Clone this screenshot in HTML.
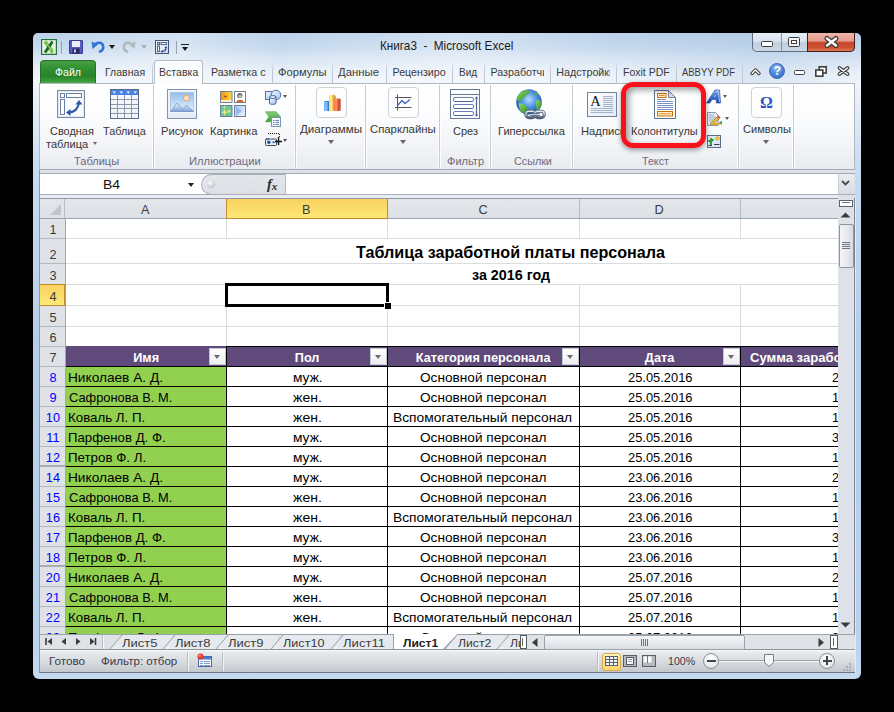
<!DOCTYPE html><html><head><meta charset="utf-8"><style>
html,body{margin:0;padding:0;background:#000;width:894px;height:712px;overflow:hidden;position:relative;font-family:"Liberation Sans",sans-serif}
div{box-sizing:border-box}
svg{display:block}
</style></head><body>
<div style="position:absolute;left:33px;top:33px;width:828px;height:646px;border-radius:5px 5px 6px 6px;background:linear-gradient(180deg,#bad0e9 0px,#c4d8ee 14px,#dae6f4 27px,#ebf1f9 40px,#f0f5fb 50px,#c9dcf0 130px,#b5cee9 300px,#b9d1eb 600px,#c4daf0 646px);"></div>
<div style="position:absolute;left:33px;top:33px;width:828px;height:50px;border-radius:5px 5px 0 0;background:linear-gradient(105deg,rgba(255,255,255,0) 0%,rgba(255,255,255,.35) 18%,rgba(170,195,225,.0) 30%,rgba(255,255,255,.35) 50%,rgba(255,255,255,0) 70%,rgba(160,190,220,.25) 88%,rgba(255,255,255,0) 100%);"></div>
<div style="position:absolute;left:39px;top:83px;width:816px;height:590px;border:1px solid #8a97a7;background:#e9edf2"></div>
<svg style="position:absolute;left:41px;top:39px;overflow:visible" width="16" height="16" viewBox="0 0 16 16"><defs><linearGradient id="xl" x1="0" y1="0" x2="1" y2="1"><stop offset="0" stop-color="#f6fbf3"/><stop offset="1" stop-color="#d4ecd0"/></linearGradient></defs>
<rect x="0.6" y="0.6" width="14.8" height="14.8" fill="url(#xl)" stroke="#23723a" stroke-width="1.2"/>
<path d="M4 2.5 L12 13.5" stroke="#6cc03a" stroke-width="3.6"/>
<path d="M11.5 2.5 L4 13.5" stroke="#1f6a2e" stroke-width="3"/>
<path d="M5.5 4.5 L10.5 11.5" stroke="#9ad868" stroke-width="1.2"/>
<path d="M13.2 2 V14" stroke="#eef8ea" stroke-width="1.4"/></svg>
<div style="position:absolute;left:61px;top:41px;width:1px;height:13px;background:#95a3b3"></div>
<svg style="position:absolute;left:69px;top:40px;overflow:visible" width="14" height="14" viewBox="0 0 14 14"><rect x="0.5" y="0.5" width="13" height="13" rx=".5" fill="#5a5cc6" stroke="#3a3a90"/>
<rect x="3" y="1" width="8" height="6" fill="#eceef6"/>
<rect x="3.5" y="8.5" width="7" height="5" fill="#262a5a"/>
<rect x="5" y="9.5" width="2" height="3" fill="#d0d4e8"/></svg>
<svg style="position:absolute;left:91px;top:39px;overflow:visible" width="15" height="15" viewBox="0 0 15 15"><path d="M3.5 6.5 C 5 3, 11 2.5, 12 6.5 C 12.8 9.5, 11 12, 8 13" fill="none" stroke="#2f74d8" stroke-width="2.6"/>
<path d="M0.5 2.5 L7 5.5 L1.5 10 Z" fill="#2f74d8"/></svg>
<div style="position:absolute;left:109px;top:45px;width:0;height:0;border-left:3.5px solid transparent;border-right:3.5px solid transparent;border-top:4px solid #1a1a1a"></div>
<svg style="position:absolute;left:121px;top:39px;overflow:visible" width="15" height="15" viewBox="0 0 15 15"><path d="M11.5 6.5 C 10 3, 4 2.5, 3 6.5 C 2.2 9.5, 4 12, 7 13" fill="none" stroke="#b5b9be" stroke-width="2.6"/>
<path d="M14.5 2.5 L8 5.5 L13.5 10 Z" fill="#b5b9be"/></svg>
<div style="position:absolute;left:141px;top:45px;width:0;height:0;border-left:3.5px solid transparent;border-right:3.5px solid transparent;border-top:4px solid #a9aeb5"></div>
<svg style="position:absolute;left:155px;top:40px;overflow:visible" width="14" height="14" viewBox="0 0 14 14"><defs><linearGradient id="fm" x1="0" y1="0" x2="1" y2="1"><stop offset="0" stop-color="#fbfcfe"/><stop offset="1" stop-color="#c9d6ea"/></linearGradient></defs>
<rect x="0.5" y="0.5" width="13" height="13" fill="url(#fm)" stroke="#3f5278"/>
<rect x="2.5" y="2.5" width="2" height="2" fill="#fff" stroke="#3f5278" stroke-width=".9"/><rect x="6" y="2.5" width="5.5" height="2" fill="#fff" stroke="#3f5278" stroke-width=".9"/>
<rect x="2.5" y="6" width="2" height="5.5" fill="#fff" stroke="#3f5278" stroke-width=".9"/>
<path d="M6.5 11.5 C9 11.5 11 10 11 7.5" fill="none" stroke="#2a4a9a" stroke-width="1.2"/><path d="M5.5 11.5 L7.5 10 V13Z M11 6 L9.6 8 H12.4Z" fill="#2a4a9a"/></svg>
<div style="position:absolute;left:176px;top:41px;width:1px;height:13px;background:#95a3b3"></div>
<div style="position:absolute;left:181px;top:44px;width:8px;height:1.2px;background:#1a1a1a"></div>
<div style="position:absolute;left:181.5px;top:46.5px;width:0;height:0;border-left:3.5px solid transparent;border-right:3.5px solid transparent;border-top:4px solid #1a1a1a"></div>
<div style="position:absolute;left:379.87px;top:40.33px;font-family:'Liberation Sans',sans-serif;font-size:12.6px;line-height:12.6px;font-weight:400;color:#1b1b1b;white-space:nowrap;transform:scaleX(0.9306);transform-origin:0 0;">Книга3&nbsp; -&nbsp; Microsoft Excel</div>
<div style="position:absolute;left:752px;top:33px;width:103px;height:19px;border:1px solid #5e6e82;border-top:none;border-radius:0 0 5px 5px;background:linear-gradient(180deg,#e6edf6 0%,#d9e3ee 45%,#c0cfdf 55%,#cbd8e6 100%)"></div>
<div style="position:absolute;left:781px;top:33px;width:1px;height:18px;background:#8696aa"></div>
<div style="position:absolute;left:807px;top:33px;width:48px;height:19px;border:1px solid #4a1a14;border-top:none;border-radius:0 0 5px 0;background:linear-gradient(180deg,#efb6a8 0%,#e39a8a 45%,#c9472d 52%,#cd5034 80%,#de7a55 100%)"></div>
<div style="position:absolute;left:761px;top:41px;width:12px;height:6px;background:#fff;border:1.5px solid #3c3c3c;border-radius:1.5px"></div>
<div style="position:absolute;left:788px;top:37px;width:12px;height:10px;background:#f4f4f4;border:1.5px solid #3c3c3c;border-radius:1.5px"></div>
<div style="position:absolute;left:791px;top:40px;width:6px;height:4px;background:#fff;border:1.5px solid #3c3c3c"></div>
<svg style="position:absolute;left:824px;top:36px;overflow:visible" width="15" height="12" viewBox="0 0 15 12"><path d="M3 2.5 L12 9.5 M12 2.5 L3 9.5" stroke="#3a3a3a" stroke-width="5" stroke-linecap="round"/>
<path d="M3 2.5 L12 9.5 M12 2.5 L3 9.5" stroke="#fff" stroke-width="2.4" stroke-linecap="round"/></svg>
<div style="position:absolute;left:40px;top:60px;width:56px;height:24px;border-radius:4px 4px 0 0;border:1px solid #2e6e2e;border-bottom:none;background:linear-gradient(180deg,#45a043 0%,#2f8f31 35%,#26832a 65%,#3c9c3c 88%,#62b85c 100%)"></div>
<div style="position:absolute;left:54.80px;top:66.64px;font-family:'Liberation Sans',sans-serif;font-size:10.7px;line-height:10.7px;font-weight:400;color:#ffffff;white-space:nowrap;transform:scaleX(0.9908);transform-origin:0 0;">Файл</div>
<div style="position:absolute;left:272px;top:61px;width:1px;height:22px;background:linear-gradient(180deg,rgba(180,195,212,0) 0%,#c2ccd8 40%,#b8c3cf 100%)"></div>
<div style="position:absolute;left:332px;top:61px;width:1px;height:22px;background:linear-gradient(180deg,rgba(180,195,212,0) 0%,#c2ccd8 40%,#b8c3cf 100%)"></div>
<div style="position:absolute;left:386px;top:61px;width:1px;height:22px;background:linear-gradient(180deg,rgba(180,195,212,0) 0%,#c2ccd8 40%,#b8c3cf 100%)"></div>
<div style="position:absolute;left:452px;top:61px;width:1px;height:22px;background:linear-gradient(180deg,rgba(180,195,212,0) 0%,#c2ccd8 40%,#b8c3cf 100%)"></div>
<div style="position:absolute;left:484px;top:61px;width:1px;height:22px;background:linear-gradient(180deg,rgba(180,195,212,0) 0%,#c2ccd8 40%,#b8c3cf 100%)"></div>
<div style="position:absolute;left:550px;top:61px;width:1px;height:22px;background:linear-gradient(180deg,rgba(180,195,212,0) 0%,#c2ccd8 40%,#b8c3cf 100%)"></div>
<div style="position:absolute;left:616px;top:61px;width:1px;height:22px;background:linear-gradient(180deg,rgba(180,195,212,0) 0%,#c2ccd8 40%,#b8c3cf 100%)"></div>
<div style="position:absolute;left:676px;top:61px;width:1px;height:22px;background:linear-gradient(180deg,rgba(180,195,212,0) 0%,#c2ccd8 40%,#b8c3cf 100%)"></div>
<div style="position:absolute;left:742px;top:61px;width:1px;height:22px;background:linear-gradient(180deg,rgba(180,195,212,0) 0%,#c2ccd8 40%,#b8c3cf 100%)"></div>
<div style="position:absolute;left:152px;top:61px;width:1px;height:22px;background:linear-gradient(180deg,rgba(180,195,212,0) 0%,#c2ccd8 40%,#b8c3cf 100%)"></div>
<div style="position:absolute;left:104.75px;top:66.64px;font-family:'Liberation Sans',sans-serif;font-size:10.7px;line-height:10.7px;font-weight:400;color:#3b3b3b;white-space:nowrap;transform:scaleX(0.9856);transform-origin:0 0;">Главная</div>
<div style="position:absolute;left:154px;top:60px;width:49px;height:24px;border:1px solid #b6bdc6;border-bottom:none;border-radius:3px 3px 0 0;background:linear-gradient(180deg,#fafbfd 0%,#fdfdfe 100%)"></div>
<div style="position:absolute;left:158.80px;top:66.64px;font-family:'Liberation Sans',sans-serif;font-size:10.7px;line-height:10.7px;font-weight:400;color:#3b3b3b;white-space:nowrap;transform:scaleX(0.9905);transform-origin:0 0;">Вставка</div>
<div style="position:absolute;left:0;top:0;width:894px;height:712px;clip-path:inset(60px 628px 629px 205px)">
<div style="position:absolute;left:211.00px;top:66.64px;font-family:'Liberation Sans',sans-serif;font-size:10.7px;line-height:10.7px;font-weight:400;color:#3b3b3b;white-space:nowrap;">Разметка страницы</div>
</div>
<div style="position:absolute;left:277.60px;top:66.64px;font-family:'Liberation Sans',sans-serif;font-size:10.7px;line-height:10.7px;font-weight:400;color:#3b3b3b;white-space:nowrap;transform:scaleX(1.0431);transform-origin:0 0;">Формулы</div>
<div style="position:absolute;left:338.00px;top:66.64px;font-family:'Liberation Sans',sans-serif;font-size:10.7px;line-height:10.7px;font-weight:400;color:#3b3b3b;white-space:nowrap;transform:scaleX(1.0603);transform-origin:0 0;">Данные</div>
<div style="position:absolute;left:0;top:0;width:894px;height:712px;clip-path:inset(60px 448px 629px 386px)">
<div style="position:absolute;left:392.50px;top:66.64px;font-family:'Liberation Sans',sans-serif;font-size:10.7px;line-height:10.7px;font-weight:400;color:#3b3b3b;white-space:nowrap;">Рецензирование</div>
</div>
<div style="position:absolute;left:458.80px;top:66.64px;font-family:'Liberation Sans',sans-serif;font-size:10.7px;line-height:10.7px;font-weight:400;color:#3b3b3b;white-space:nowrap;transform:scaleX(0.9354);transform-origin:0 0;">Вид</div>
<div style="position:absolute;left:0;top:0;width:894px;height:712px;clip-path:inset(60px 350px 629px 484px)">
<div style="position:absolute;left:490.50px;top:66.64px;font-family:'Liberation Sans',sans-serif;font-size:10.7px;line-height:10.7px;font-weight:400;color:#3b3b3b;white-space:nowrap;">Разработчик</div>
</div>
<div style="position:absolute;left:0;top:0;width:894px;height:712px;clip-path:inset(60px 284px 629px 550px)">
<div style="position:absolute;left:556.30px;top:66.64px;font-family:'Liberation Sans',sans-serif;font-size:10.7px;line-height:10.7px;font-weight:400;color:#3b3b3b;white-space:nowrap;">Надстройки</div>
</div>
<div style="position:absolute;left:622.60px;top:66.64px;font-family:'Liberation Sans',sans-serif;font-size:10.7px;line-height:10.7px;font-weight:400;color:#3b3b3b;white-space:nowrap;transform:scaleX(0.9838);transform-origin:0 0;">Foxit PDF</div>
<div style="position:absolute;left:682.00px;top:66.64px;font-family:'Liberation Sans',sans-serif;font-size:10.7px;line-height:10.7px;font-weight:400;color:#3b3b3b;white-space:nowrap;transform:scaleX(0.8849);transform-origin:0 0;">ABBYY PDF</div>
<div style="position:absolute;left:39px;top:83px;width:816px;height:87px;border:1px solid #b1b8c1;border-bottom:1px solid #a5acb5;background:linear-gradient(180deg,#ffffff 0%,#fbfcfd 40%,#f1f3f6 75%,#e8ebef 100%)"></div>
<div style="position:absolute;left:155px;top:83px;width:47px;height:1px;background:#fdfdfe"></div>
<div style="position:absolute;left:152px;top:85px;width:3px;height:84px;background:linear-gradient(90deg,rgba(255,255,255,.9) 0,rgba(255,255,255,.9) 1px,#c6cbd2 1px,#c6cbd2 2px,rgba(255,255,255,.9) 2px)"></div>
<div style="position:absolute;left:294px;top:85px;width:3px;height:84px;background:linear-gradient(90deg,rgba(255,255,255,.9) 0,rgba(255,255,255,.9) 1px,#c6cbd2 1px,#c6cbd2 2px,rgba(255,255,255,.9) 2px)"></div>
<div style="position:absolute;left:364px;top:85px;width:3px;height:84px;background:linear-gradient(90deg,rgba(255,255,255,.9) 0,rgba(255,255,255,.9) 1px,#c6cbd2 1px,#c6cbd2 2px,rgba(255,255,255,.9) 2px)"></div>
<div style="position:absolute;left:438px;top:85px;width:3px;height:84px;background:linear-gradient(90deg,rgba(255,255,255,.9) 0,rgba(255,255,255,.9) 1px,#c6cbd2 1px,#c6cbd2 2px,rgba(255,255,255,.9) 2px)"></div>
<div style="position:absolute;left:489px;top:85px;width:3px;height:84px;background:linear-gradient(90deg,rgba(255,255,255,.9) 0,rgba(255,255,255,.9) 1px,#c6cbd2 1px,#c6cbd2 2px,rgba(255,255,255,.9) 2px)"></div>
<div style="position:absolute;left:571px;top:85px;width:3px;height:84px;background:linear-gradient(90deg,rgba(255,255,255,.9) 0,rgba(255,255,255,.9) 1px,#c6cbd2 1px,#c6cbd2 2px,rgba(255,255,255,.9) 2px)"></div>
<div style="position:absolute;left:737px;top:85px;width:3px;height:84px;background:linear-gradient(90deg,rgba(255,255,255,.9) 0,rgba(255,255,255,.9) 1px,#c6cbd2 1px,#c6cbd2 2px,rgba(255,255,255,.9) 2px)"></div>
<div style="position:absolute;left:792px;top:85px;width:3px;height:84px;background:linear-gradient(90deg,rgba(255,255,255,.9) 0,rgba(255,255,255,.9) 1px,#c6cbd2 1px,#c6cbd2 2px,rgba(255,255,255,.9) 2px)"></div>
<svg style="position:absolute;left:57px;top:90px;overflow:visible" width="28" height="28" viewBox="0 0 28 28"><rect x="0.5" y="0.5" width="27" height="27" fill="#fafbfd" stroke="#7a8aa3"/>
<rect x="1.5" y="1.5" width="25" height="25" fill="none" stroke="#e4e9f1"/>
<rect x="3.5" y="3.5" width="4" height="4" fill="#fff" stroke="#6a7fa6"/>
<rect x="9.5" y="3.5" width="15" height="4" fill="#fff" stroke="#6a7fa6"/>
<rect x="3.5" y="9.5" width="4" height="15" fill="#fff" stroke="#6a7fa6"/>
<path d="M12 22.5 C 17 22, 21 19, 22 13" fill="none" stroke="#2d5aa6" stroke-width="2"/>
<path d="M9 22.5 L13.5 19 L13.5 26 Z" fill="#2d5aa6"/><path d="M22 10 L18.5 14.5 L25.5 14.5 Z" fill="#2d5aa6"/></svg>
<svg style="position:absolute;left:110px;top:89px;overflow:visible" width="29" height="30" viewBox="0 0 29 30"><rect x="0.5" y="0.5" width="28" height="29" fill="#f3f5f9" stroke="#5d6b86"/>
<rect x="1" y="1" width="27" height="5" fill="#4a82e4"/>
<path d="M7.5 6 V29 M14.5 6 V29 M21.5 6 V29 M1 10.5 H28 M1 15.5 H28 M1 19.5 H28 M1 24.5 H28" stroke="#8d99ad" stroke-width="1"/>
<path d="M2.5 2.5 H6 L4.25 4.5Z M9.5 2.5 H13 L11.25 4.5Z M16.5 2.5 H20 L18.25 4.5Z M23.5 2.5 H27 L25.25 4.5Z" fill="#fff"/></svg>
<div style="position:absolute;left:49.80px;top:126.07px;font-family:'Liberation Sans',sans-serif;font-size:10.9px;line-height:10.9px;font-weight:400;color:#363636;white-space:nowrap;transform:scaleX(1.0029);transform-origin:0 0;">Сводная</div>
<div style="position:absolute;left:46.40px;top:139.07px;font-family:'Liberation Sans',sans-serif;font-size:10.9px;line-height:10.9px;font-weight:400;color:#363636;white-space:nowrap;transform:scaleX(1.0178);transform-origin:0 0;">таблица</div>
<div style="position:absolute;left:93px;top:142px;width:0;height:0;border-left:2.5px solid transparent;border-right:2.5px solid transparent;border-top:3px solid #6a6a6a"></div>
<div style="position:absolute;left:103.00px;top:126.07px;font-family:'Liberation Sans',sans-serif;font-size:10.9px;line-height:10.9px;font-weight:400;color:#363636;white-space:nowrap;">Таблица</div>
<div style="position:absolute;left:74.40px;top:155.97px;font-family:'Liberation Sans',sans-serif;font-size:10.9px;line-height:10.9px;font-weight:400;color:#6f6a7e;white-space:nowrap;transform:scaleX(1.0147);transform-origin:0 0;">Таблицы</div>
<svg style="position:absolute;left:167px;top:89px;overflow:visible" width="30" height="30" viewBox="0 0 30 30"><rect x="0.5" y="0.5" width="29" height="29" fill="#eef3f9" stroke="#8094b2"/>
<defs><linearGradient id="sky" x1="0" y1="0" x2="0" y2="1"><stop offset="0" stop-color="#8fbef0"/><stop offset="1" stop-color="#e8f2fc"/></linearGradient>
<linearGradient id="mt" x1="0" y1="0" x2="0" y2="1"><stop offset="0" stop-color="#f4f8fe"/><stop offset="1" stop-color="#7d9fd8"/></linearGradient></defs>
<rect x="3.5" y="3.5" width="23" height="19" fill="url(#sky)" stroke="#a9bdd8" stroke-width=".8"/>
<circle cx="19.5" cy="9" r="3" fill="#fde6c8" stroke="#f29a58" stroke-width="1"/>
<path d="M3.5 22.5 L10 14 L15.5 20 L19.5 16 L26.5 22.5Z" fill="url(#mt)" stroke="#6f8fc0" stroke-width=".7"/>
<rect x="1" y="24.5" width="28" height="4.5" fill="#e4ebf5"/></svg>
<svg style="position:absolute;left:220px;top:91px;overflow:visible" width="26" height="26" viewBox="0 0 26 26"><defs><linearGradient id="ca1" x1="0" x2="1"><stop offset="0" stop-color="#f48a10"/><stop offset="1" stop-color="#fde040"/></linearGradient>
<linearGradient id="ca4" x1="0" y1="0" x2="1" y2="1"><stop offset="0" stop-color="#a8c8f8"/><stop offset="1" stop-color="#eef4fe"/></linearGradient></defs>
<rect x="0.5" y="0.5" width="11.5" height="11" fill="url(#ca1)" stroke="#6f7f96"/><path d="M1 9 H11.5 V11 H1Z" fill="#fde8d0"/><ellipse cx="5.5" cy="5.5" rx="1.8" ry="1" fill="#b05a20"/>
<rect x="14.5" y="0.5" width="11" height="11" fill="#fff" stroke="#6f7f96"/><circle cx="19.8" cy="4.5" r="2.6" fill="#6a6a6a"/><circle cx="20" cy="5.2" r="1.5" fill="#c8c8c8"/><path d="M16.5 11 C16.5 8 23.5 8 23.5 11Z" fill="#d8601a"/>
<rect x="0.5" y="14.5" width="11.5" height="11" fill="#6cc89c" stroke="#6f7f96"/><path d="M4.5 17.5 L5.3 20.5 L8.5 21.3 L5.3 22 L4.5 25 L3.7 22 L1 21.3 L3.7 20.5Z M9 18 L9.6 19.6 L11.2 20.2 L9.6 20.8 L9 22.4 L8.4 20.8 L6.8 20.2 L8.4 19.6Z M4.5 14.5 L5 16 L6.5 16.3 L5 16.7 L4.5 17.5 L4 16.7 L2.5 16.3 L4 16Z" fill="#f8f078"/>
<rect x="14.5" y="14.5" width="11" height="11" fill="url(#ca4)" stroke="#6f7f96"/><path d="M16 15.5 L22 20 L16 25Z" fill="#8ab0ee" opacity=".8"/></svg>
<svg style="position:absolute;left:265px;top:89px;overflow:visible" width="16" height="16" viewBox="0 0 16 16"><defs><linearGradient id="sh" x1="0" y1="0" x2="1" y2="1"><stop offset="0" stop-color="#eef5fd"/><stop offset="1" stop-color="#a9c6ee"/></linearGradient></defs>
<rect x="0.5" y="2.5" width="9" height="8" fill="url(#sh)" stroke="#4f72b0"/>
<circle cx="11" cy="6" r="4.8" fill="url(#sh)" stroke="#4f72b0"/>
<path d="M4.5 8 V14 C4.5 15.8 11 15.8 11 14 V8" fill="url(#sh)" stroke="#3f62a0"/><ellipse cx="7.75" cy="8" rx="3.25" ry="1.4" fill="#f4f8fe" stroke="#3f62a0"/></svg>
<div style="position:absolute;left:283px;top:95px;width:0;height:0;border-left:2.5px solid transparent;border-right:2.5px solid transparent;border-top:3px solid #555"></div>
<svg style="position:absolute;left:265px;top:111px;overflow:visible" width="16" height="16" viewBox="0 0 16 16"><defs><linearGradient id="sa" x1="0" y1="0" x2="0" y2="1"><stop offset="0" stop-color="#8ad07a"/><stop offset="1" stop-color="#3a9a3a"/></linearGradient></defs>
<path d="M0.5 0.8 H11 L15.5 5.8 L11 10.8 H0.5 L4 5.8Z" fill="url(#sa)" stroke="#4a9a4a" stroke-width=".6"/>
<rect x="6.5" y="6.5" width="9" height="9" fill="#f4f7fb" stroke="#8094ae"/>
<path d="M8 9.5 H9.5 M10.5 9.5 H14 M8 11.5 H9.5 M10.5 11.5 H14 M8 13.5 H9.5 M10.5 13.5 H14" stroke="#6a84b8" stroke-width="1"/></svg>
<svg style="position:absolute;left:265px;top:133px;overflow:visible" width="17" height="14" viewBox="0 0 17 14"><path d="M3 0.5 H14.5 V5" fill="none" stroke="#222" stroke-width="1" stroke-dasharray="1,1"/>
<rect x="0.5" y="6" width="11" height="6.5" rx="1" fill="#e8eef6" stroke="#3a4a66"/><path d="M1 6 h3" stroke="#2a5aa8" stroke-width="1.2"/>
<circle cx="3.8" cy="9.3" r="1.7" fill="#1f4f98"/><rect x="7.5" y="8.5" width="2" height="1.6" fill="#1f4f98"/>
<path d="M13.5 4 V12 M10 8.5 H17" stroke="#111" stroke-width="1.4"/></svg>
<div style="position:absolute;left:283px;top:139px;width:0;height:0;border-left:2.5px solid transparent;border-right:2.5px solid transparent;border-top:3px solid #555"></div>
<div style="position:absolute;left:161.40px;top:126.07px;font-family:'Liberation Sans',sans-serif;font-size:10.9px;line-height:10.9px;font-weight:400;color:#363636;white-space:nowrap;transform:scaleX(1.0240);transform-origin:0 0;">Рисунок</div>
<div style="position:absolute;left:209.60px;top:126.07px;font-family:'Liberation Sans',sans-serif;font-size:10.9px;line-height:10.9px;font-weight:400;color:#363636;white-space:nowrap;transform:scaleX(1.0231);transform-origin:0 0;">Картинка</div>
<div style="position:absolute;left:189.40px;top:155.97px;font-family:'Liberation Sans',sans-serif;font-size:10.9px;line-height:10.9px;font-weight:400;color:#6f6a7e;white-space:nowrap;transform:scaleX(1.0291);transform-origin:0 0;">Иллюстрации</div>
<div style="position:absolute;left:316px;top:87px;width:31px;height:31px;border:1px solid #cdd2d9;border-radius:4px;background:#fdfdfe"></div>
<svg style="position:absolute;left:323px;top:94px;overflow:visible" width="18" height="18" viewBox="0 0 18 18"><defs><linearGradient id="cb" x1="0" x2="1"><stop offset="0" stop-color="#5aa8f4"/><stop offset=".4" stop-color="#9ccaf8"/><stop offset="1" stop-color="#2a6ac8"/></linearGradient>
<linearGradient id="cy" x1="0" x2="1"><stop offset="0" stop-color="#f8d848"/><stop offset=".4" stop-color="#fff0a0"/><stop offset="1" stop-color="#d09a00"/></linearGradient>
<linearGradient id="cr" x1="0" x2="1"><stop offset="0" stop-color="#ff6a3a"/><stop offset=".4" stop-color="#ff9a70"/><stop offset="1" stop-color="#d02a08"/></linearGradient></defs>
<path d="M1 8 L2.2 7 H6 V17 H1Z" fill="url(#cb)"/><path d="M1 8 L2.2 7 H6.5 L5.5 8Z" fill="#3a88e8"/>
<path d="M6 2 L7.2 1 H11.5 V17 H6Z" fill="url(#cy)"/><path d="M11.5 1 L12.5 2 V16.5 L11.5 17Z" fill="#a87800"/>
<path d="M11 5.5 L12.2 4.5 H16.5 V17 H11Z" fill="url(#cr)"/><path d="M16.5 4.5 L17.5 5.5 V16.5 L16.5 17Z" fill="#901a04"/></svg>
<div style="position:absolute;left:300.00px;top:123.87px;font-family:'Liberation Sans',sans-serif;font-size:10.9px;line-height:10.9px;font-weight:400;color:#363636;white-space:nowrap;transform:scaleX(1.0636);transform-origin:0 0;">Диаграммы</div>
<div style="position:absolute;left:328px;top:140px;width:0;height:0;border-left:3.5px solid transparent;border-right:3.5px solid transparent;border-top:4px solid #666"></div>
<div style="position:absolute;left:388px;top:87px;width:31px;height:31px;border:1px solid #cdd2d9;border-radius:4px;background:#fdfdfe"></div>
<svg style="position:absolute;left:395px;top:94px;overflow:visible" width="17" height="17" viewBox="0 0 17 17"><path d="M2.5 0.5 V16.5 M0 3.5 H16.5 M0 13.5 H16.5" stroke="#555" stroke-width="1"/>
<path d="M3 11 L7 6.5 L10 9.5 L15 5.5" fill="none" stroke="#3a66c8" stroke-width="1.4"/></svg>
<div style="position:absolute;left:370.40px;top:123.87px;font-family:'Liberation Sans',sans-serif;font-size:10.9px;line-height:10.9px;font-weight:400;color:#363636;white-space:nowrap;transform:scaleX(1.0400);transform-origin:0 0;">Спарклайны</div>
<div style="position:absolute;left:400px;top:140px;width:0;height:0;border-left:3.5px solid transparent;border-right:3.5px solid transparent;border-top:4px solid #666"></div>
<svg style="position:absolute;left:450px;top:89px;overflow:visible" width="30" height="30" viewBox="0 0 30 30"><rect x="0.5" y="0.5" width="29" height="29" fill="#fbfcfd" stroke="#6a7b96"/>
<path d="M1 5.5 H29" stroke="#6a7b96"/>
<rect x="3.5" y="8.5" width="20" height="4" rx="1.5" fill="#fff" stroke="#6a80b4"/><path d="M4.5 12.5 H22.5" stroke="#4a64a8"/>
<rect x="3.5" y="15.5" width="20" height="4" rx="1.5" fill="#fff" stroke="#6a80b4"/><path d="M4.5 19.5 H22.5" stroke="#4a64a8"/>
<rect x="3.5" y="22.5" width="20" height="4" rx="1.5" fill="#fff" stroke="#6a80b4"/><path d="M4.5 26.5 H22.5" stroke="#4a64a8"/>
<path d="M26.5 8.5 V27" stroke="#4a64a8" stroke-width="1.2"/><path d="M24.8 9.5 L26.5 7.3 L28.2 9.5Z M24.8 25.5 L26.5 27.7 L28.2 25.5Z" fill="#4a64a8"/></svg>
<div style="position:absolute;left:453.30px;top:126.27px;font-family:'Liberation Sans',sans-serif;font-size:10.9px;line-height:10.9px;font-weight:400;color:#363636;white-space:nowrap;transform:scaleX(1.0105);transform-origin:0 0;">Срез</div>
<div style="position:absolute;left:446.90px;top:155.97px;font-family:'Liberation Sans',sans-serif;font-size:10.9px;line-height:10.9px;font-weight:400;color:#6f6a7e;white-space:nowrap;transform:scaleX(1.0129);transform-origin:0 0;">Фильтр</div>
<svg style="position:absolute;left:515px;top:89px;overflow:visible" width="32" height="31" viewBox="0 0 32 31"><defs><radialGradient id="gl" cx=".5" cy=".4" r=".62"><stop offset="0" stop-color="#b8dcff"/><stop offset=".5" stop-color="#4a90e4"/><stop offset="1" stop-color="#1a4aa0"/></radialGradient>
<linearGradient id="gg" x1="0" y1="0" x2="1" y2="1"><stop offset="0" stop-color="#8ed860"/><stop offset="1" stop-color="#2e8a2a"/></linearGradient>
<linearGradient id="ch" x1="0" y1="0" x2="0" y2="1"><stop offset="0" stop-color="#e8eef6"/><stop offset=".5" stop-color="#a9b8cc"/><stop offset="1" stop-color="#4f6078"/></linearGradient></defs>
<circle cx="14" cy="13" r="12.8" fill="url(#gl)"/>
<path d="M2 9 C3 5, 7 2, 12 1 C14 2, 16 3, 14 4.5 C12 5, 11 6, 9.5 8 C8 10, 6 12, 4 12.5 C3 12, 2 11, 2 9Z" fill="url(#gg)"/>
<path d="M4 14 C6 14, 9 15, 12 18 C14 20, 15 22, 13 25 C10 25.5, 7 24, 5 21 C4 19, 3.5 16, 4 14Z" fill="url(#gg)"/>
<path d="M21.5 11 C24 10, 26 12, 26.5 15 C26 19, 24 21, 22 21 C21 18, 20.5 14, 21.5 11Z" fill="url(#gg)"/>
<path d="M19 3 C21 3, 23 4, 24 6 C22 7, 20 6, 19 3Z" fill="#5ab040"/>
<rect x="10.8" y="22.2" width="9.5" height="6.5" rx="3.2" fill="none" stroke="#4a5a70" stroke-width="3"/>
<rect x="10.8" y="22.2" width="9.5" height="6.5" rx="3.2" fill="none" stroke="url(#ch)" stroke-width="1.6"/>
<rect x="19.8" y="22.2" width="9.5" height="6.5" rx="3.2" fill="none" stroke="#4a5a70" stroke-width="3"/>
<rect x="19.8" y="22.2" width="9.5" height="6.5" rx="3.2" fill="none" stroke="url(#ch)" stroke-width="1.6"/>
<path d="M15 25.5 H25" stroke="#4a5a70" stroke-width="2.6"/><path d="M15 25.5 H25" stroke="#c8d4e2" stroke-width="1.2"/></svg>
<div style="position:absolute;left:498.40px;top:126.27px;font-family:'Liberation Sans',sans-serif;font-size:10.9px;line-height:10.9px;font-weight:400;color:#363636;white-space:nowrap;transform:scaleX(1.0202);transform-origin:0 0;">Гиперссылка</div>
<div style="position:absolute;left:513.70px;top:155.97px;font-family:'Liberation Sans',sans-serif;font-size:10.9px;line-height:10.9px;font-weight:400;color:#6f6a7e;white-space:nowrap;transform:scaleX(0.9881);transform-origin:0 0;">Ссылки</div>
<svg style="position:absolute;left:587px;top:92px;overflow:visible" width="30" height="25" viewBox="0 0 30 25"><defs><linearGradient id="tb" x1="0" y1="0" x2="1" y2="1"><stop offset="0" stop-color="#ffffff"/><stop offset="1" stop-color="#e2eaf6"/></linearGradient></defs>
<rect x="0.5" y="0.5" width="29" height="24" fill="url(#tb)" stroke="#6f809c"/>
<text x="3.2" y="13.6" font-family="Liberation Serif" font-size="14.5" font-weight="400" fill="#111">A</text>
<path d="M16 4.5 H26 M16 6.5 H26 M16 8.5 H26 M16 10.5 H26 M16 12.5 H26 M16 14.5 H26 M3.5 16.5 H26 M3.5 18.5 H26 M3.5 20.5 H26" stroke="#a3b3cc" stroke-width="1"/></svg>
<div style="position:absolute;left:0;top:0;width:894px;height:712px;clip-path:inset(120px 273px 572px 575px)">
<div style="position:absolute;left:580.80px;top:126.37px;font-family:'Liberation Sans',sans-serif;font-size:10.9px;line-height:10.9px;font-weight:400;color:#363636;white-space:nowrap;transform:scaleX(1.0297);transform-origin:0 0;">Надпись</div>
</div>
<svg style="position:absolute;left:654px;top:90px;overflow:visible" width="22" height="29" viewBox="0 0 22 29"><path d="M0.5 0.5 H14.5 L21.5 7.5 V28.5 H0.5Z" fill="#fdfdfe" stroke="#5f6f88"/>
<path d="M14.5 0.5 V7.5 H21.5Z" fill="#d6e0ee" stroke="#5f6f88" stroke-width=".8"/>
<rect x="3.5" y="3.5" width="8.5" height="4" fill="#fdf0cc" stroke="#c8700e"/><path d="M5 5.5 H10.5" stroke="#f08a20"/>
<path d="M3 9.5 H12 M3 11.5 H19 M3 13.5 H19 M3 15.5 H19 M3 17.5 H19 M3 19.5 H19" stroke="#7f94c6" stroke-width="1"/>
<rect x="3.5" y="21.5" width="15" height="4.5" fill="#fdf0cc" stroke="#c8700e"/><path d="M5 23.75 H17" stroke="#f08a20"/></svg>
<div style="position:absolute;left:630.90px;top:126.37px;font-family:'Liberation Sans',sans-serif;font-size:10.9px;line-height:10.9px;font-weight:400;color:#363636;white-space:nowrap;transform:scaleX(1.0067);transform-origin:0 0;">Колонтитулы</div>
<div style="position:absolute;left:642.00px;top:155.87px;font-family:'Liberation Sans',sans-serif;font-size:10.9px;line-height:10.9px;font-weight:400;color:#6f6a7e;white-space:nowrap;transform:scaleX(0.9807);transform-origin:0 0;">Текст</div>
<svg style="position:absolute;left:706px;top:89px;overflow:visible" width="16" height="15" viewBox="0 0 16 15"><defs><linearGradient id="wa" x1="0" y1="0" x2="0" y2="1"><stop offset="0" stop-color="#9cc0f4"/><stop offset=".5" stop-color="#3f74d8"/><stop offset="1" stop-color="#1f48a8"/></linearGradient></defs>
<path d="M0.5 14 L9 1 H13.5 L14.5 14 H10.5 L10.2 10.5 H6 L3.8 14Z M7.3 8 H10 L9.8 4.2Z" fill="url(#wa)" stroke="#2a4fa0" stroke-width=".7"/>
<path d="M11 2 L12.5 2 L13.5 13" stroke="#c8dcfa" stroke-width=".8" fill="none"/></svg>
<div style="position:absolute;left:723px;top:95px;width:0;height:0;border-left:2.5px solid transparent;border-right:2.5px solid transparent;border-top:3px solid #5a5a5a"></div>
<svg style="position:absolute;left:706px;top:112px;overflow:visible" width="16" height="14" viewBox="0 0 16 14"><path d="M1.5 0.5 H9.5 L12 3 V13.5 H1.5Z" fill="#e9eef6" stroke="#6e7e98" stroke-width=".8"/>
<path d="M3 3 h5 M3 5 h7 M3 7 h7 M3 9 h4" stroke="#8aa0c0" stroke-width=".8"/>
<path d="M4 12 L11 5 L13 7 L6 13Z" fill="#f2c230" stroke="#7a5a10" stroke-width=".6"/><path d="M11 5 L12.5 3.5 L14.5 5.5 L13 7Z" fill="#e04a3a"/>
<path d="M8 12.5 C10 11, 12 13, 15.5 11" stroke="#e0a020" stroke-width="1.6" fill="none"/><path d="M13 10 L16 9 L16 13Z" fill="#30a050"/></svg>
<div style="position:absolute;left:725px;top:117px;width:0;height:0;border-left:2.5px solid transparent;border-right:2.5px solid transparent;border-top:3px solid #5a5a5a"></div>
<svg style="position:absolute;left:707px;top:135px;overflow:visible" width="14" height="13" viewBox="0 0 14 13"><rect x="0.5" y="0.5" width="13" height="12" fill="#dfe8f4" stroke="#5a6c88"/>
<path d="M4 3 V10 M2 5 C2 7 4 7 4 7 M6 4 C6 6 4 6 4 6" stroke="#2a9a3a" stroke-width="1.8" fill="none"/>
<circle cx="10.5" cy="3.5" r="1.8" fill="#f8d040" stroke="#b08010" stroke-width=".5"/>
<path d="M1.5 10.5 H5 M7 9.5 H12.5" stroke="#3a3a48" stroke-width="1"/></svg>
<div style="position:absolute;left:621px;top:82px;width:85px;height:66px;border:5px solid #f8101a;border-radius:12px;box-shadow:0px 2px 5px rgba(0,0,0,.4), inset 3px 3px 6px rgba(0,0,0,.38)"></div>
<div style="position:absolute;left:751px;top:87px;width:31px;height:31px;border:1px solid #cdd2d9;border-radius:4px;background:#fdfdfe"></div>
<div style="position:absolute;left:759.90px;top:95.26px;font-family:'Liberation Serif',sans-serif;font-size:16px;line-height:16px;font-weight:700;color:#2a52c4;white-space:nowrap;">Ω</div>
<div style="position:absolute;left:742.70px;top:124.07px;font-family:'Liberation Sans',sans-serif;font-size:10.9px;line-height:10.9px;font-weight:400;color:#363636;white-space:nowrap;transform:scaleX(1.0154);transform-origin:0 0;">Символы</div>
<div style="position:absolute;left:763px;top:140px;width:0;height:0;border-left:3.5px solid transparent;border-right:3.5px solid transparent;border-top:4px solid #666"></div>
<div style="position:absolute;left:40px;top:170px;width:815px;height:28px;background:#dde2e8"></div>
<div style="position:absolute;left:40px;top:173px;width:815px;height:1px;background:#a3aab3"></div>
<div style="position:absolute;left:40px;top:174px;width:170px;height:20px;background:#fff"></div>
<div style="position:absolute;left:102.89px;top:178.75px;font-family:'Liberation Sans',sans-serif;font-size:12.7px;line-height:12.7px;font-weight:400;color:#111;white-space:nowrap;transform:scaleX(1.1063);transform-origin:0 0;">B4</div>
<div style="position:absolute;left:188px;top:183px;width:0;height:0;border-left:3.5px solid transparent;border-right:3.5px solid transparent;border-top:4px solid #222"></div>
<div style="position:absolute;left:201px;top:173.5px;width:85px;height:21px;border:1px solid #a9b0b9;border-right:1px solid #b5bcc5;border-radius:11px 0 0 11px;background:linear-gradient(180deg,#e3e6ea,#dcdfe4)"></div>
<div style="position:absolute;left:207px;top:180px;width:8px;height:8px;border-radius:50%;background:radial-gradient(circle at 40% 35%,#ffffff 0,#d8dbe0 45%,#a9aeb6 100%)"></div>
<div style="position:absolute;left:267.00px;top:177.23px;font-family:'Liberation Serif',sans-serif;font-size:14.5px;line-height:14.5px;font-weight:700;color:#2a2a2a;white-space:nowrap;"><i>f</i><span style='font-size:11px;position:relative;top:0.5px'><i>x</i></span></div>
<div style="position:absolute;left:286px;top:174px;width:552px;height:20px;background:#fff"></div>
<div style="position:absolute;left:838px;top:174px;width:16px;height:20px;background:linear-gradient(180deg,#e9ecf0,#d9dde3);border-left:1px solid #c9ced5"></div>
<svg style="position:absolute;left:841px;top:180px;overflow:visible" width="9" height="6" viewBox="0 0 9 6"><path d="M1 1 L4.5 4.5 L8 1" fill="none" stroke="#4a4a4a" stroke-width="1.8"/></svg>
<div style="position:absolute;left:40px;top:194px;width:815px;height:1px;background:#a9b0b9"></div>
<div style="position:absolute;left:40px;top:195px;width:798px;height:3px;background:#e9ecf5"></div>
<div style="position:absolute;left:838px;top:195px;width:16px;height:3px;background:#dde2e8"></div>
<div style="position:absolute;left:40px;top:198px;width:798px;height:1px;background:#9198a2"></div>
<div style="position:absolute;left:40px;top:199px;width:798px;height:19px;background:linear-gradient(180deg,#e3e7ec,#dde1e6)"></div>
<div style="position:absolute;left:40px;top:218px;width:798px;height:1px;background:#9ea5ae"></div>
<div style="position:absolute;left:64px;top:199px;width:1px;height:19px;background:#b9bfc6"></div>
<svg style="position:absolute;left:50px;top:204px;overflow:visible" width="11" height="11" viewBox="0 0 11 11"><path d="M11 0 V11 H0Z" fill="#c2c6cb"/></svg>
<div style="position:absolute;left:226px;top:199px;width:162px;height:20px;background:linear-gradient(180deg,#f9d160,#fde978);border:1px solid #c48a2e;border-top:none"></div>
<div style="position:absolute;left:226px;top:199px;width:1px;height:19px;background:#b3b9c0"></div>
<div style="position:absolute;left:141.00px;top:204.15px;font-family:'Liberation Sans',sans-serif;font-size:12.7px;line-height:12.7px;font-weight:400;color:#3a3a3a;white-space:nowrap;">A</div>
<div style="position:absolute;left:387px;top:199px;width:1px;height:19px;background:#b3b9c0"></div>
<div style="position:absolute;left:302.00px;top:204.15px;font-family:'Liberation Sans',sans-serif;font-size:12.7px;line-height:12.7px;font-weight:400;color:#3a3a3a;white-space:nowrap;">B</div>
<div style="position:absolute;left:579px;top:199px;width:1px;height:19px;background:#b3b9c0"></div>
<div style="position:absolute;left:478.50px;top:204.15px;font-family:'Liberation Sans',sans-serif;font-size:12.7px;line-height:12.7px;font-weight:400;color:#3a3a3a;white-space:nowrap;">C</div>
<div style="position:absolute;left:740px;top:199px;width:1px;height:19px;background:#b3b9c0"></div>
<div style="position:absolute;left:654.50px;top:204.15px;font-family:'Liberation Sans',sans-serif;font-size:12.7px;line-height:12.7px;font-weight:400;color:#3a3a3a;white-space:nowrap;">D</div>
<div style="position:absolute;left:226px;top:199px;width:1px;height:19px;background:#c48a2e"></div>
<div style="position:absolute;left:387px;top:199px;width:1px;height:19px;background:#c48a2e"></div>
<div style="position:absolute;left:66px;top:219px;width:772px;height:415px;background:#fff"></div>
<div style="position:absolute;left:40px;top:219px;width:25px;height:415px;background:#dfe3e8"></div>
<div style="position:absolute;left:65px;top:219px;width:1px;height:415px;background:#9ea5ae"></div>
<div style="position:absolute;left:0;top:0;width:894px;height:712px;clip-path:inset(219px 56px 78px 40px)">
<div style="position:absolute;left:40px;top:238px;width:25px;height:1px;background:#b3b9c0"></div>
<div style="position:absolute;left:66px;top:238px;width:772px;height:1px;background:#dadcdd"></div>
<div style="position:absolute;left:40px;top:263px;width:25px;height:1px;background:#b3b9c0"></div>
<div style="position:absolute;left:66px;top:263px;width:772px;height:1px;background:#dadcdd"></div>
<div style="position:absolute;left:40px;top:284px;width:25px;height:1px;background:#b3b9c0"></div>
<div style="position:absolute;left:66px;top:284px;width:772px;height:1px;background:#dadcdd"></div>
<div style="position:absolute;left:40px;top:305px;width:25px;height:1px;background:#b3b9c0"></div>
<div style="position:absolute;left:66px;top:305px;width:772px;height:1px;background:#dadcdd"></div>
<div style="position:absolute;left:40px;top:326px;width:25px;height:1px;background:#b3b9c0"></div>
<div style="position:absolute;left:66px;top:326px;width:772px;height:1px;background:#dadcdd"></div>
<div style="position:absolute;left:40px;top:346px;width:25px;height:1px;background:#b3b9c0"></div>
<div style="position:absolute;left:66px;top:346px;width:772px;height:1px;background:#dadcdd"></div>
<div style="position:absolute;left:40px;top:366px;width:25px;height:1px;background:#b3b9c0"></div>
<div style="position:absolute;left:66px;top:366px;width:772px;height:1px;background:#dadcdd"></div>
<div style="position:absolute;left:40px;top:386px;width:25px;height:1px;background:#b3b9c0"></div>
<div style="position:absolute;left:66px;top:386px;width:772px;height:1px;background:#dadcdd"></div>
<div style="position:absolute;left:40px;top:406px;width:25px;height:1px;background:#b3b9c0"></div>
<div style="position:absolute;left:66px;top:406px;width:772px;height:1px;background:#dadcdd"></div>
<div style="position:absolute;left:40px;top:426px;width:25px;height:1px;background:#b3b9c0"></div>
<div style="position:absolute;left:66px;top:426px;width:772px;height:1px;background:#dadcdd"></div>
<div style="position:absolute;left:40px;top:446px;width:25px;height:1px;background:#b3b9c0"></div>
<div style="position:absolute;left:66px;top:446px;width:772px;height:1px;background:#dadcdd"></div>
<div style="position:absolute;left:40px;top:466px;width:25px;height:1px;background:#b3b9c0"></div>
<div style="position:absolute;left:40px;top:465px;width:25px;height:2px;background:#a9aeb5"></div>
<div style="position:absolute;left:66px;top:466px;width:772px;height:1px;background:#dadcdd"></div>
<div style="position:absolute;left:40px;top:486px;width:25px;height:1px;background:#b3b9c0"></div>
<div style="position:absolute;left:66px;top:486px;width:772px;height:1px;background:#dadcdd"></div>
<div style="position:absolute;left:40px;top:506px;width:25px;height:1px;background:#b3b9c0"></div>
<div style="position:absolute;left:66px;top:506px;width:772px;height:1px;background:#dadcdd"></div>
<div style="position:absolute;left:40px;top:526px;width:25px;height:1px;background:#b3b9c0"></div>
<div style="position:absolute;left:66px;top:526px;width:772px;height:1px;background:#dadcdd"></div>
<div style="position:absolute;left:40px;top:546px;width:25px;height:1px;background:#b3b9c0"></div>
<div style="position:absolute;left:66px;top:546px;width:772px;height:1px;background:#dadcdd"></div>
<div style="position:absolute;left:40px;top:566px;width:25px;height:1px;background:#b3b9c0"></div>
<div style="position:absolute;left:40px;top:565px;width:25px;height:2px;background:#a9aeb5"></div>
<div style="position:absolute;left:66px;top:566px;width:772px;height:1px;background:#dadcdd"></div>
<div style="position:absolute;left:40px;top:586px;width:25px;height:1px;background:#b3b9c0"></div>
<div style="position:absolute;left:66px;top:586px;width:772px;height:1px;background:#dadcdd"></div>
<div style="position:absolute;left:40px;top:606px;width:25px;height:1px;background:#b3b9c0"></div>
<div style="position:absolute;left:66px;top:606px;width:772px;height:1px;background:#dadcdd"></div>
<div style="position:absolute;left:40px;top:626px;width:25px;height:1px;background:#b3b9c0"></div>
<div style="position:absolute;left:66px;top:626px;width:772px;height:1px;background:#dadcdd"></div>
<div style="position:absolute;left:40px;top:646px;width:25px;height:1px;background:#b3b9c0"></div>
<div style="position:absolute;left:66px;top:646px;width:772px;height:1px;background:#dadcdd"></div>
<div style="position:absolute;left:226px;top:219px;width:1px;height:128px;background:#dadcdd"></div>
<div style="position:absolute;left:387px;top:219px;width:1px;height:128px;background:#dadcdd"></div>
<div style="position:absolute;left:579px;top:219px;width:1px;height:128px;background:#dadcdd"></div>
<div style="position:absolute;left:740px;top:219px;width:1px;height:128px;background:#dadcdd"></div>
<div style="position:absolute;left:66px;top:239px;width:772px;height:24px;background:#fff"></div>
<div style="position:absolute;left:66px;top:264px;width:772px;height:20px;background:#fff"></div>
</div>
<div style="position:absolute;left:0;top:0;width:894px;height:712px;clip-path:inset(218px 829px 78px 40px)">
<div style="position:absolute;left:49.40px;top:223.95px;font-family:'Liberation Sans',sans-serif;font-size:12.7px;line-height:12.7px;font-weight:400;color:#3a3a3a;white-space:nowrap;">1</div>
</div>
<div style="position:absolute;left:0;top:0;width:894px;height:712px;clip-path:inset(238px 829px 78px 40px)">
<div style="position:absolute;left:49.40px;top:248.95px;font-family:'Liberation Sans',sans-serif;font-size:12.7px;line-height:12.7px;font-weight:400;color:#3a3a3a;white-space:nowrap;">2</div>
</div>
<div style="position:absolute;left:0;top:0;width:894px;height:712px;clip-path:inset(263px 829px 78px 40px)">
<div style="position:absolute;left:49.40px;top:269.95px;font-family:'Liberation Sans',sans-serif;font-size:12.7px;line-height:12.7px;font-weight:400;color:#3a3a3a;white-space:nowrap;">3</div>
</div>
<div style="position:absolute;left:0;top:0;width:894px;height:712px;clip-path:inset(284px 829px 78px 40px)">
<div style="position:absolute;left:49.40px;top:290.95px;font-family:'Liberation Sans',sans-serif;font-size:12.7px;line-height:12.7px;font-weight:400;color:#3a3a3a;white-space:nowrap;">4</div>
</div>
<div style="position:absolute;left:0;top:0;width:894px;height:712px;clip-path:inset(305px 829px 78px 40px)">
<div style="position:absolute;left:49.40px;top:311.95px;font-family:'Liberation Sans',sans-serif;font-size:12.7px;line-height:12.7px;font-weight:400;color:#3a3a3a;white-space:nowrap;">5</div>
</div>
<div style="position:absolute;left:0;top:0;width:894px;height:712px;clip-path:inset(326px 829px 78px 40px)">
<div style="position:absolute;left:49.40px;top:331.95px;font-family:'Liberation Sans',sans-serif;font-size:12.7px;line-height:12.7px;font-weight:400;color:#3a3a3a;white-space:nowrap;">6</div>
</div>
<div style="position:absolute;left:0;top:0;width:894px;height:712px;clip-path:inset(346px 829px 78px 40px)">
<div style="position:absolute;left:49.40px;top:351.95px;font-family:'Liberation Sans',sans-serif;font-size:12.7px;line-height:12.7px;font-weight:400;color:#3a3a3a;white-space:nowrap;">7</div>
</div>
<div style="position:absolute;left:0;top:0;width:894px;height:712px;clip-path:inset(366px 829px 78px 40px)">
<div style="position:absolute;left:49.40px;top:371.95px;font-family:'Liberation Sans',sans-serif;font-size:12.7px;line-height:12.7px;font-weight:400;color:#0000ff;white-space:nowrap;">8</div>
</div>
<div style="position:absolute;left:0;top:0;width:894px;height:712px;clip-path:inset(386px 829px 78px 40px)">
<div style="position:absolute;left:49.40px;top:391.95px;font-family:'Liberation Sans',sans-serif;font-size:12.7px;line-height:12.7px;font-weight:400;color:#0000ff;white-space:nowrap;">9</div>
</div>
<div style="position:absolute;left:0;top:0;width:894px;height:712px;clip-path:inset(406px 829px 78px 40px)">
<div style="position:absolute;left:45.87px;top:411.95px;font-family:'Liberation Sans',sans-serif;font-size:12.7px;line-height:12.7px;font-weight:400;color:#0000ff;white-space:nowrap;">10</div>
</div>
<div style="position:absolute;left:0;top:0;width:894px;height:712px;clip-path:inset(426px 829px 78px 40px)">
<div style="position:absolute;left:46.34px;top:431.95px;font-family:'Liberation Sans',sans-serif;font-size:12.7px;line-height:12.7px;font-weight:400;color:#0000ff;white-space:nowrap;">11</div>
</div>
<div style="position:absolute;left:0;top:0;width:894px;height:712px;clip-path:inset(446px 829px 78px 40px)">
<div style="position:absolute;left:45.87px;top:451.95px;font-family:'Liberation Sans',sans-serif;font-size:12.7px;line-height:12.7px;font-weight:400;color:#0000ff;white-space:nowrap;">12</div>
</div>
<div style="position:absolute;left:0;top:0;width:894px;height:712px;clip-path:inset(466px 829px 78px 40px)">
<div style="position:absolute;left:45.87px;top:471.95px;font-family:'Liberation Sans',sans-serif;font-size:12.7px;line-height:12.7px;font-weight:400;color:#0000ff;white-space:nowrap;">14</div>
</div>
<div style="position:absolute;left:0;top:0;width:894px;height:712px;clip-path:inset(486px 829px 78px 40px)">
<div style="position:absolute;left:45.87px;top:491.95px;font-family:'Liberation Sans',sans-serif;font-size:12.7px;line-height:12.7px;font-weight:400;color:#0000ff;white-space:nowrap;">15</div>
</div>
<div style="position:absolute;left:0;top:0;width:894px;height:712px;clip-path:inset(506px 829px 78px 40px)">
<div style="position:absolute;left:45.87px;top:511.95px;font-family:'Liberation Sans',sans-serif;font-size:12.7px;line-height:12.7px;font-weight:400;color:#0000ff;white-space:nowrap;">16</div>
</div>
<div style="position:absolute;left:0;top:0;width:894px;height:712px;clip-path:inset(526px 829px 78px 40px)">
<div style="position:absolute;left:45.87px;top:531.95px;font-family:'Liberation Sans',sans-serif;font-size:12.7px;line-height:12.7px;font-weight:400;color:#0000ff;white-space:nowrap;">17</div>
</div>
<div style="position:absolute;left:0;top:0;width:894px;height:712px;clip-path:inset(546px 829px 78px 40px)">
<div style="position:absolute;left:45.87px;top:551.95px;font-family:'Liberation Sans',sans-serif;font-size:12.7px;line-height:12.7px;font-weight:400;color:#0000ff;white-space:nowrap;">18</div>
</div>
<div style="position:absolute;left:0;top:0;width:894px;height:712px;clip-path:inset(566px 829px 78px 40px)">
<div style="position:absolute;left:45.87px;top:571.95px;font-family:'Liberation Sans',sans-serif;font-size:12.7px;line-height:12.7px;font-weight:400;color:#0000ff;white-space:nowrap;">20</div>
</div>
<div style="position:absolute;left:0;top:0;width:894px;height:712px;clip-path:inset(586px 829px 78px 40px)">
<div style="position:absolute;left:45.87px;top:591.95px;font-family:'Liberation Sans',sans-serif;font-size:12.7px;line-height:12.7px;font-weight:400;color:#0000ff;white-space:nowrap;">21</div>
</div>
<div style="position:absolute;left:0;top:0;width:894px;height:712px;clip-path:inset(606px 829px 78px 40px)">
<div style="position:absolute;left:45.87px;top:611.95px;font-family:'Liberation Sans',sans-serif;font-size:12.7px;line-height:12.7px;font-weight:400;color:#0000ff;white-space:nowrap;">22</div>
</div>
<div style="position:absolute;left:0;top:0;width:894px;height:712px;clip-path:inset(626px 829px 78px 40px)">
<div style="position:absolute;left:45.87px;top:631.95px;font-family:'Liberation Sans',sans-serif;font-size:12.7px;line-height:12.7px;font-weight:400;color:#0000ff;white-space:nowrap;">23</div>
</div>
<div style="position:absolute;left:40px;top:284px;width:25px;height:22px;background:linear-gradient(180deg,#f9d160,#fde978);border:1px solid #c48a2e;border-left:none"></div>
<div style="position:absolute;left:49.40px;top:290.95px;font-family:'Liberation Sans',sans-serif;font-size:12.7px;line-height:12.7px;font-weight:400;color:#3a3a3a;white-space:nowrap;">4</div>
<div style="position:absolute;left:356.00px;top:244.49px;font-family:'Liberation Sans',sans-serif;font-size:16.2px;line-height:16.2px;font-weight:700;color:#000;white-space:nowrap;transform:scaleX(0.9963);transform-origin:0 0;">Таблица заработной платы персонала</div>
<div style="position:absolute;left:472.00px;top:268.15px;font-family:'Liberation Sans',sans-serif;font-size:14px;line-height:14px;font-weight:700;color:#000;white-space:nowrap;transform:scaleX(1.0222);transform-origin:0 0;">за 2016 год</div>
<div style="position:absolute;left:225px;top:283px;width:164px;height:24px;border:3px solid #000"></div>
<div style="position:absolute;left:384px;top:302px;width:7px;height:7px;background:#fff"></div>
<div style="position:absolute;left:385px;top:303px;width:6px;height:6px;background:#000"></div>
<div style="position:absolute;left:0;top:0;width:894px;height:712px;clip-path:inset(346px 56px 78px 66px)">
<div style="position:absolute;left:66px;top:346px;width:772px;height:20px;background:#604a7b"></div>
<div style="position:absolute;left:226px;top:346px;width:612px;height:1px;background:#000"></div>
<div style="position:absolute;left:226px;top:346px;width:1px;height:288px;background:#000"></div>
<div style="position:absolute;left:387px;top:346px;width:1px;height:288px;background:#000"></div>
<div style="position:absolute;left:579px;top:346px;width:1px;height:288px;background:#000"></div>
<div style="position:absolute;left:740px;top:346px;width:1px;height:288px;background:#000"></div>
<div style="position:absolute;left:133.15px;top:351.75px;font-family:'Liberation Sans',sans-serif;font-size:12.7px;line-height:12.7px;font-weight:700;color:#fff;white-space:nowrap;">Имя</div>
<div style="position:absolute;left:294.82px;top:351.75px;font-family:'Liberation Sans',sans-serif;font-size:12.7px;line-height:12.7px;font-weight:700;color:#fff;white-space:nowrap;">Пол</div>
<div style="position:absolute;left:415.79px;top:351.75px;font-family:'Liberation Sans',sans-serif;font-size:12.7px;line-height:12.7px;font-weight:700;color:#fff;white-space:nowrap;">Категория персонала</div>
<div style="position:absolute;left:644.85px;top:351.75px;font-family:'Liberation Sans',sans-serif;font-size:12.7px;line-height:12.7px;font-weight:700;color:#fff;white-space:nowrap;">Дата</div>
<div style="position:absolute;left:750.40px;top:351.75px;font-family:'Liberation Sans',sans-serif;font-size:12.7px;line-height:12.7px;font-weight:700;color:#fff;white-space:nowrap;transform:scaleX(1.0300);transform-origin:0 0;">Сумма заработной платы</div>
<div style="position:absolute;left:209px;top:348px;width:17px;height:17px;border:1px solid #c4c8cf;background:linear-gradient(180deg,#ffffff,#eceef2)"></div>
<div style="position:absolute;left:214px;top:355px;width:0;height:0;border-left:3.5px solid transparent;border-right:3.5px solid transparent;border-top:4px solid #6a6a6a"></div>
<div style="position:absolute;left:370px;top:348px;width:17px;height:17px;border:1px solid #c4c8cf;background:linear-gradient(180deg,#ffffff,#eceef2)"></div>
<div style="position:absolute;left:375px;top:355px;width:0;height:0;border-left:3.5px solid transparent;border-right:3.5px solid transparent;border-top:4px solid #6a6a6a"></div>
<div style="position:absolute;left:562px;top:348px;width:17px;height:17px;border:1px solid #c4c8cf;background:linear-gradient(180deg,#ffffff,#eceef2)"></div>
<div style="position:absolute;left:567px;top:355px;width:0;height:0;border-left:3.5px solid transparent;border-right:3.5px solid transparent;border-top:4px solid #6a6a6a"></div>
<div style="position:absolute;left:723px;top:348px;width:17px;height:17px;border:1px solid #c4c8cf;background:linear-gradient(180deg,#ffffff,#eceef2)"></div>
<div style="position:absolute;left:728px;top:355px;width:0;height:0;border-left:3.5px solid transparent;border-right:3.5px solid transparent;border-top:4px solid #6a6a6a"></div>
<div style="position:absolute;left:66px;top:367px;width:160px;height:19px;background:#92d050"></div>
<div style="position:absolute;left:66px;top:366px;width:772px;height:1px;background:#000"></div>
<div style="position:absolute;left:67.82px;top:372.15px;font-family:'Liberation Sans',sans-serif;font-size:12.7px;line-height:12.7px;font-weight:400;color:#000;white-space:nowrap;transform:scaleX(1.0773);transform-origin:0 0;">Николаев А. Д.</div>
<div style="position:absolute;left:292.65px;top:372.15px;font-family:'Liberation Sans',sans-serif;font-size:12.7px;line-height:12.7px;font-weight:400;color:#000;white-space:nowrap;transform:scaleX(1.0842);transform-origin:0 0;">муж.</div>
<div style="position:absolute;left:420.40px;top:372.15px;font-family:'Liberation Sans',sans-serif;font-size:12.7px;line-height:12.7px;font-weight:400;color:#000;white-space:nowrap;transform:scaleX(1.0744);transform-origin:0 0;">Основной персонал</div>
<div style="position:absolute;left:627.90px;top:372.15px;font-family:'Liberation Sans',sans-serif;font-size:12.7px;line-height:12.7px;font-weight:400;color:#000;white-space:nowrap;transform:scaleX(1.0150);transform-origin:0 0;">25.05.2016</div>
<div style="position:absolute;left:832.00px;top:372.15px;font-family:'Liberation Sans',sans-serif;font-size:12.7px;line-height:12.7px;font-weight:400;color:#000;white-space:nowrap;">2</div>
<div style="position:absolute;left:66px;top:387px;width:160px;height:19px;background:#92d050"></div>
<div style="position:absolute;left:66px;top:386px;width:772px;height:1px;background:#000"></div>
<div style="position:absolute;left:68.90px;top:392.15px;font-family:'Liberation Sans',sans-serif;font-size:12.7px;line-height:12.7px;font-weight:400;color:#000;white-space:nowrap;transform:scaleX(1.0145);transform-origin:0 0;">Сафронова В. М.</div>
<div style="position:absolute;left:292.65px;top:392.15px;font-family:'Liberation Sans',sans-serif;font-size:12.7px;line-height:12.7px;font-weight:400;color:#000;white-space:nowrap;transform:scaleX(1.1076);transform-origin:0 0;">жен.</div>
<div style="position:absolute;left:420.40px;top:392.15px;font-family:'Liberation Sans',sans-serif;font-size:12.7px;line-height:12.7px;font-weight:400;color:#000;white-space:nowrap;transform:scaleX(1.0744);transform-origin:0 0;">Основной персонал</div>
<div style="position:absolute;left:627.90px;top:392.15px;font-family:'Liberation Sans',sans-serif;font-size:12.7px;line-height:12.7px;font-weight:400;color:#000;white-space:nowrap;transform:scaleX(1.0150);transform-origin:0 0;">25.05.2016</div>
<div style="position:absolute;left:832.00px;top:392.15px;font-family:'Liberation Sans',sans-serif;font-size:12.7px;line-height:12.7px;font-weight:400;color:#000;white-space:nowrap;">1</div>
<div style="position:absolute;left:66px;top:407px;width:160px;height:19px;background:#92d050"></div>
<div style="position:absolute;left:66px;top:406px;width:772px;height:1px;background:#000"></div>
<div style="position:absolute;left:67.85px;top:412.15px;font-family:'Liberation Sans',sans-serif;font-size:12.7px;line-height:12.7px;font-weight:400;color:#000;white-space:nowrap;transform:scaleX(1.0480);transform-origin:0 0;">Коваль Л. П.</div>
<div style="position:absolute;left:292.65px;top:412.15px;font-family:'Liberation Sans',sans-serif;font-size:12.7px;line-height:12.7px;font-weight:400;color:#000;white-space:nowrap;transform:scaleX(1.1076);transform-origin:0 0;">жен.</div>
<div style="position:absolute;left:393.41px;top:412.15px;font-family:'Liberation Sans',sans-serif;font-size:12.7px;line-height:12.7px;font-weight:400;color:#000;white-space:nowrap;transform:scaleX(1.0877);transform-origin:0 0;">Вспомогательный персонал</div>
<div style="position:absolute;left:627.90px;top:412.15px;font-family:'Liberation Sans',sans-serif;font-size:12.7px;line-height:12.7px;font-weight:400;color:#000;white-space:nowrap;transform:scaleX(1.0150);transform-origin:0 0;">25.05.2016</div>
<div style="position:absolute;left:832.00px;top:412.15px;font-family:'Liberation Sans',sans-serif;font-size:12.7px;line-height:12.7px;font-weight:400;color:#000;white-space:nowrap;">1</div>
<div style="position:absolute;left:66px;top:427px;width:160px;height:19px;background:#92d050"></div>
<div style="position:absolute;left:66px;top:426px;width:772px;height:1px;background:#000"></div>
<div style="position:absolute;left:67.86px;top:432.15px;font-family:'Liberation Sans',sans-serif;font-size:12.7px;line-height:12.7px;font-weight:400;color:#000;white-space:nowrap;transform:scaleX(1.0396);transform-origin:0 0;">Парфенов Д. Ф.</div>
<div style="position:absolute;left:292.65px;top:432.15px;font-family:'Liberation Sans',sans-serif;font-size:12.7px;line-height:12.7px;font-weight:400;color:#000;white-space:nowrap;transform:scaleX(1.0842);transform-origin:0 0;">муж.</div>
<div style="position:absolute;left:420.40px;top:432.15px;font-family:'Liberation Sans',sans-serif;font-size:12.7px;line-height:12.7px;font-weight:400;color:#000;white-space:nowrap;transform:scaleX(1.0744);transform-origin:0 0;">Основной персонал</div>
<div style="position:absolute;left:627.90px;top:432.15px;font-family:'Liberation Sans',sans-serif;font-size:12.7px;line-height:12.7px;font-weight:400;color:#000;white-space:nowrap;transform:scaleX(1.0150);transform-origin:0 0;">25.05.2016</div>
<div style="position:absolute;left:832.00px;top:432.15px;font-family:'Liberation Sans',sans-serif;font-size:12.7px;line-height:12.7px;font-weight:400;color:#000;white-space:nowrap;">3</div>
<div style="position:absolute;left:66px;top:447px;width:160px;height:19px;background:#92d050"></div>
<div style="position:absolute;left:66px;top:446px;width:772px;height:1px;background:#000"></div>
<div style="position:absolute;left:67.85px;top:452.15px;font-family:'Liberation Sans',sans-serif;font-size:12.7px;line-height:12.7px;font-weight:400;color:#000;white-space:nowrap;transform:scaleX(1.0485);transform-origin:0 0;">Петров Ф. Л.</div>
<div style="position:absolute;left:292.65px;top:452.15px;font-family:'Liberation Sans',sans-serif;font-size:12.7px;line-height:12.7px;font-weight:400;color:#000;white-space:nowrap;transform:scaleX(1.0842);transform-origin:0 0;">муж.</div>
<div style="position:absolute;left:420.40px;top:452.15px;font-family:'Liberation Sans',sans-serif;font-size:12.7px;line-height:12.7px;font-weight:400;color:#000;white-space:nowrap;transform:scaleX(1.0744);transform-origin:0 0;">Основной персонал</div>
<div style="position:absolute;left:627.90px;top:452.15px;font-family:'Liberation Sans',sans-serif;font-size:12.7px;line-height:12.7px;font-weight:400;color:#000;white-space:nowrap;transform:scaleX(1.0150);transform-origin:0 0;">25.05.2016</div>
<div style="position:absolute;left:832.00px;top:452.15px;font-family:'Liberation Sans',sans-serif;font-size:12.7px;line-height:12.7px;font-weight:400;color:#000;white-space:nowrap;">1</div>
<div style="position:absolute;left:66px;top:467px;width:160px;height:19px;background:#92d050"></div>
<div style="position:absolute;left:66px;top:466px;width:772px;height:1px;background:#000"></div>
<div style="position:absolute;left:67.82px;top:472.15px;font-family:'Liberation Sans',sans-serif;font-size:12.7px;line-height:12.7px;font-weight:400;color:#000;white-space:nowrap;transform:scaleX(1.0773);transform-origin:0 0;">Николаев А. Д.</div>
<div style="position:absolute;left:292.65px;top:472.15px;font-family:'Liberation Sans',sans-serif;font-size:12.7px;line-height:12.7px;font-weight:400;color:#000;white-space:nowrap;transform:scaleX(1.0842);transform-origin:0 0;">муж.</div>
<div style="position:absolute;left:420.40px;top:472.15px;font-family:'Liberation Sans',sans-serif;font-size:12.7px;line-height:12.7px;font-weight:400;color:#000;white-space:nowrap;transform:scaleX(1.0744);transform-origin:0 0;">Основной персонал</div>
<div style="position:absolute;left:627.90px;top:472.15px;font-family:'Liberation Sans',sans-serif;font-size:12.7px;line-height:12.7px;font-weight:400;color:#000;white-space:nowrap;transform:scaleX(1.0150);transform-origin:0 0;">23.06.2016</div>
<div style="position:absolute;left:832.00px;top:472.15px;font-family:'Liberation Sans',sans-serif;font-size:12.7px;line-height:12.7px;font-weight:400;color:#000;white-space:nowrap;">2</div>
<div style="position:absolute;left:66px;top:487px;width:160px;height:19px;background:#92d050"></div>
<div style="position:absolute;left:66px;top:486px;width:772px;height:1px;background:#000"></div>
<div style="position:absolute;left:68.90px;top:492.15px;font-family:'Liberation Sans',sans-serif;font-size:12.7px;line-height:12.7px;font-weight:400;color:#000;white-space:nowrap;transform:scaleX(1.0145);transform-origin:0 0;">Сафронова В. М.</div>
<div style="position:absolute;left:292.65px;top:492.15px;font-family:'Liberation Sans',sans-serif;font-size:12.7px;line-height:12.7px;font-weight:400;color:#000;white-space:nowrap;transform:scaleX(1.1076);transform-origin:0 0;">жен.</div>
<div style="position:absolute;left:420.40px;top:492.15px;font-family:'Liberation Sans',sans-serif;font-size:12.7px;line-height:12.7px;font-weight:400;color:#000;white-space:nowrap;transform:scaleX(1.0744);transform-origin:0 0;">Основной персонал</div>
<div style="position:absolute;left:627.90px;top:492.15px;font-family:'Liberation Sans',sans-serif;font-size:12.7px;line-height:12.7px;font-weight:400;color:#000;white-space:nowrap;transform:scaleX(1.0150);transform-origin:0 0;">23.06.2016</div>
<div style="position:absolute;left:832.00px;top:492.15px;font-family:'Liberation Sans',sans-serif;font-size:12.7px;line-height:12.7px;font-weight:400;color:#000;white-space:nowrap;">1</div>
<div style="position:absolute;left:66px;top:507px;width:160px;height:19px;background:#92d050"></div>
<div style="position:absolute;left:66px;top:506px;width:772px;height:1px;background:#000"></div>
<div style="position:absolute;left:67.85px;top:512.15px;font-family:'Liberation Sans',sans-serif;font-size:12.7px;line-height:12.7px;font-weight:400;color:#000;white-space:nowrap;transform:scaleX(1.0480);transform-origin:0 0;">Коваль Л. П.</div>
<div style="position:absolute;left:292.65px;top:512.15px;font-family:'Liberation Sans',sans-serif;font-size:12.7px;line-height:12.7px;font-weight:400;color:#000;white-space:nowrap;transform:scaleX(1.1076);transform-origin:0 0;">жен.</div>
<div style="position:absolute;left:393.41px;top:512.15px;font-family:'Liberation Sans',sans-serif;font-size:12.7px;line-height:12.7px;font-weight:400;color:#000;white-space:nowrap;transform:scaleX(1.0877);transform-origin:0 0;">Вспомогательный персонал</div>
<div style="position:absolute;left:627.90px;top:512.15px;font-family:'Liberation Sans',sans-serif;font-size:12.7px;line-height:12.7px;font-weight:400;color:#000;white-space:nowrap;transform:scaleX(1.0150);transform-origin:0 0;">23.06.2016</div>
<div style="position:absolute;left:832.00px;top:512.15px;font-family:'Liberation Sans',sans-serif;font-size:12.7px;line-height:12.7px;font-weight:400;color:#000;white-space:nowrap;">1</div>
<div style="position:absolute;left:66px;top:527px;width:160px;height:19px;background:#92d050"></div>
<div style="position:absolute;left:66px;top:526px;width:772px;height:1px;background:#000"></div>
<div style="position:absolute;left:67.86px;top:532.15px;font-family:'Liberation Sans',sans-serif;font-size:12.7px;line-height:12.7px;font-weight:400;color:#000;white-space:nowrap;transform:scaleX(1.0396);transform-origin:0 0;">Парфенов Д. Ф.</div>
<div style="position:absolute;left:292.65px;top:532.15px;font-family:'Liberation Sans',sans-serif;font-size:12.7px;line-height:12.7px;font-weight:400;color:#000;white-space:nowrap;transform:scaleX(1.0842);transform-origin:0 0;">муж.</div>
<div style="position:absolute;left:420.40px;top:532.15px;font-family:'Liberation Sans',sans-serif;font-size:12.7px;line-height:12.7px;font-weight:400;color:#000;white-space:nowrap;transform:scaleX(1.0744);transform-origin:0 0;">Основной персонал</div>
<div style="position:absolute;left:627.90px;top:532.15px;font-family:'Liberation Sans',sans-serif;font-size:12.7px;line-height:12.7px;font-weight:400;color:#000;white-space:nowrap;transform:scaleX(1.0150);transform-origin:0 0;">23.06.2016</div>
<div style="position:absolute;left:832.00px;top:532.15px;font-family:'Liberation Sans',sans-serif;font-size:12.7px;line-height:12.7px;font-weight:400;color:#000;white-space:nowrap;">3</div>
<div style="position:absolute;left:66px;top:547px;width:160px;height:19px;background:#92d050"></div>
<div style="position:absolute;left:66px;top:546px;width:772px;height:1px;background:#000"></div>
<div style="position:absolute;left:67.85px;top:552.15px;font-family:'Liberation Sans',sans-serif;font-size:12.7px;line-height:12.7px;font-weight:400;color:#000;white-space:nowrap;transform:scaleX(1.0485);transform-origin:0 0;">Петров Ф. Л.</div>
<div style="position:absolute;left:292.65px;top:552.15px;font-family:'Liberation Sans',sans-serif;font-size:12.7px;line-height:12.7px;font-weight:400;color:#000;white-space:nowrap;transform:scaleX(1.0842);transform-origin:0 0;">муж.</div>
<div style="position:absolute;left:420.40px;top:552.15px;font-family:'Liberation Sans',sans-serif;font-size:12.7px;line-height:12.7px;font-weight:400;color:#000;white-space:nowrap;transform:scaleX(1.0744);transform-origin:0 0;">Основной персонал</div>
<div style="position:absolute;left:627.90px;top:552.15px;font-family:'Liberation Sans',sans-serif;font-size:12.7px;line-height:12.7px;font-weight:400;color:#000;white-space:nowrap;transform:scaleX(1.0150);transform-origin:0 0;">23.06.2016</div>
<div style="position:absolute;left:832.00px;top:552.15px;font-family:'Liberation Sans',sans-serif;font-size:12.7px;line-height:12.7px;font-weight:400;color:#000;white-space:nowrap;">1</div>
<div style="position:absolute;left:66px;top:567px;width:160px;height:19px;background:#92d050"></div>
<div style="position:absolute;left:66px;top:566px;width:772px;height:1px;background:#000"></div>
<div style="position:absolute;left:67.82px;top:572.15px;font-family:'Liberation Sans',sans-serif;font-size:12.7px;line-height:12.7px;font-weight:400;color:#000;white-space:nowrap;transform:scaleX(1.0773);transform-origin:0 0;">Николаев А. Д.</div>
<div style="position:absolute;left:292.65px;top:572.15px;font-family:'Liberation Sans',sans-serif;font-size:12.7px;line-height:12.7px;font-weight:400;color:#000;white-space:nowrap;transform:scaleX(1.0842);transform-origin:0 0;">муж.</div>
<div style="position:absolute;left:420.40px;top:572.15px;font-family:'Liberation Sans',sans-serif;font-size:12.7px;line-height:12.7px;font-weight:400;color:#000;white-space:nowrap;transform:scaleX(1.0744);transform-origin:0 0;">Основной персонал</div>
<div style="position:absolute;left:627.90px;top:572.15px;font-family:'Liberation Sans',sans-serif;font-size:12.7px;line-height:12.7px;font-weight:400;color:#000;white-space:nowrap;transform:scaleX(1.0150);transform-origin:0 0;">25.07.2016</div>
<div style="position:absolute;left:832.00px;top:572.15px;font-family:'Liberation Sans',sans-serif;font-size:12.7px;line-height:12.7px;font-weight:400;color:#000;white-space:nowrap;">2</div>
<div style="position:absolute;left:66px;top:587px;width:160px;height:19px;background:#92d050"></div>
<div style="position:absolute;left:66px;top:586px;width:772px;height:1px;background:#000"></div>
<div style="position:absolute;left:68.90px;top:592.15px;font-family:'Liberation Sans',sans-serif;font-size:12.7px;line-height:12.7px;font-weight:400;color:#000;white-space:nowrap;transform:scaleX(1.0145);transform-origin:0 0;">Сафронова В. М.</div>
<div style="position:absolute;left:292.65px;top:592.15px;font-family:'Liberation Sans',sans-serif;font-size:12.7px;line-height:12.7px;font-weight:400;color:#000;white-space:nowrap;transform:scaleX(1.1076);transform-origin:0 0;">жен.</div>
<div style="position:absolute;left:420.40px;top:592.15px;font-family:'Liberation Sans',sans-serif;font-size:12.7px;line-height:12.7px;font-weight:400;color:#000;white-space:nowrap;transform:scaleX(1.0744);transform-origin:0 0;">Основной персонал</div>
<div style="position:absolute;left:627.90px;top:592.15px;font-family:'Liberation Sans',sans-serif;font-size:12.7px;line-height:12.7px;font-weight:400;color:#000;white-space:nowrap;transform:scaleX(1.0150);transform-origin:0 0;">25.07.2016</div>
<div style="position:absolute;left:832.00px;top:592.15px;font-family:'Liberation Sans',sans-serif;font-size:12.7px;line-height:12.7px;font-weight:400;color:#000;white-space:nowrap;">1</div>
<div style="position:absolute;left:66px;top:607px;width:160px;height:19px;background:#92d050"></div>
<div style="position:absolute;left:66px;top:606px;width:772px;height:1px;background:#000"></div>
<div style="position:absolute;left:67.85px;top:612.15px;font-family:'Liberation Sans',sans-serif;font-size:12.7px;line-height:12.7px;font-weight:400;color:#000;white-space:nowrap;transform:scaleX(1.0480);transform-origin:0 0;">Коваль Л. П.</div>
<div style="position:absolute;left:292.65px;top:612.15px;font-family:'Liberation Sans',sans-serif;font-size:12.7px;line-height:12.7px;font-weight:400;color:#000;white-space:nowrap;transform:scaleX(1.1076);transform-origin:0 0;">жен.</div>
<div style="position:absolute;left:393.41px;top:612.15px;font-family:'Liberation Sans',sans-serif;font-size:12.7px;line-height:12.7px;font-weight:400;color:#000;white-space:nowrap;transform:scaleX(1.0877);transform-origin:0 0;">Вспомогательный персонал</div>
<div style="position:absolute;left:627.90px;top:612.15px;font-family:'Liberation Sans',sans-serif;font-size:12.7px;line-height:12.7px;font-weight:400;color:#000;white-space:nowrap;transform:scaleX(1.0150);transform-origin:0 0;">25.07.2016</div>
<div style="position:absolute;left:832.00px;top:612.15px;font-family:'Liberation Sans',sans-serif;font-size:12.7px;line-height:12.7px;font-weight:400;color:#000;white-space:nowrap;">1</div>
<div style="position:absolute;left:66px;top:627px;width:160px;height:19px;background:#92d050"></div>
<div style="position:absolute;left:66px;top:626px;width:772px;height:1px;background:#000"></div>
<div style="position:absolute;left:67.86px;top:632.15px;font-family:'Liberation Sans',sans-serif;font-size:12.7px;line-height:12.7px;font-weight:400;color:#000;white-space:nowrap;transform:scaleX(1.0396);transform-origin:0 0;">Парфенов Д. Ф.</div>
<div style="position:absolute;left:292.65px;top:632.15px;font-family:'Liberation Sans',sans-serif;font-size:12.7px;line-height:12.7px;font-weight:400;color:#000;white-space:nowrap;transform:scaleX(1.0842);transform-origin:0 0;">муж.</div>
<div style="position:absolute;left:420.40px;top:632.15px;font-family:'Liberation Sans',sans-serif;font-size:12.7px;line-height:12.7px;font-weight:400;color:#000;white-space:nowrap;transform:scaleX(1.0744);transform-origin:0 0;">Основной персонал</div>
<div style="position:absolute;left:627.90px;top:632.15px;font-family:'Liberation Sans',sans-serif;font-size:12.7px;line-height:12.7px;font-weight:400;color:#000;white-space:nowrap;transform:scaleX(1.0150);transform-origin:0 0;">25.07.2016</div>
<div style="position:absolute;left:832.00px;top:632.15px;font-family:'Liberation Sans',sans-serif;font-size:12.7px;line-height:12.7px;font-weight:400;color:#000;white-space:nowrap;">3</div>
</div>
<div style="position:absolute;left:838px;top:198px;width:16px;height:436px;background:#dee2e8"></div>
<div style="position:absolute;left:839px;top:200px;width:14px;height:7px;background:#fff;border:1px solid #5a6270"></div>
<div style="position:absolute;left:842px;top:202px;width:8px;height:1px;background:#6a7280"></div>
<svg style="position:absolute;left:840px;top:212px;overflow:visible" width="11" height="6" viewBox="0 0 11 6"><path d="M0.5 5.5 L5.5 0.5 L10.5 5.5Z" fill="#3c3c3c"/></svg>
<div style="position:absolute;left:838.5px;top:224px;width:15px;height:44px;border:1px solid #8e959e;border-radius:2px;background:linear-gradient(90deg,#f4f5f7,#e4e7eb 60%,#d6dae0)"></div>
<div style="position:absolute;left:842px;top:242px;width:8px;height:1px;background:#6f757d"></div>
<div style="position:absolute;left:842px;top:244px;width:8px;height:1px;background:#6f757d"></div>
<div style="position:absolute;left:842px;top:246px;width:8px;height:1px;background:#6f757d"></div>
<div style="position:absolute;left:842px;top:248px;width:8px;height:1px;background:#6f757d"></div>
<svg style="position:absolute;left:840px;top:622px;overflow:visible" width="11" height="6" viewBox="0 0 11 6"><path d="M0.5 0.5 L5.5 5.5 L10.5 0.5Z" fill="#3c3c3c"/></svg>
<div style="position:absolute;left:854px;top:198px;width:1px;height:475px;background:#7a8594"></div>
<div style="position:absolute;left:855px;top:198px;width:1px;height:475px;background:rgba(255,255,255,.55)"></div>
<div style="position:absolute;left:40px;top:634px;width:815px;height:16px;background:#dfe3e8"></div>
<div style="position:absolute;left:40px;top:634px;width:815px;height:1px;background:#9aa2ac"></div>
<svg style="position:absolute;left:45px;top:638px;overflow:visible" width="52" height="7" viewBox="0 0 52 7"><path d="M1 0 V7" stroke="#3c3c3c" stroke-width="1.6"/><path d="M7 0 L2.5 3.5 L7 7Z" fill="#3c3c3c"/>
<path d="M21 0 L16.5 3.5 L21 7Z" fill="#3c3c3c"/>
<path d="M31 0 L35.5 3.5 L31 7Z" fill="#3c3c3c"/>
<path d="M45 0 L49.5 3.5 L45 7Z" fill="#3c3c3c"/><path d="M50.5 0 V7" stroke="#3c3c3c" stroke-width="1.6"/></svg>
<div style="position:absolute;left:102px;top:635px;width:1px;height:14px;background:#b4bac2"></div>
<div style="position:absolute;left:103px;top:635px;width:1px;height:14px;background:#f6f7f9"></div>
<div style="position:absolute;left:0;top:0;width:894px;height:712px;clip-path:inset(634px 374px 62px 102px)">
<svg style="position:absolute;left:109px;top:634px;overflow:visible" width="63" height="16" viewBox="0 0 63 16"><path d="M0.5 15.5 L13.5 0.5 H62.5 V15.5Z" fill="#e6e9ed"/><path d="M0.5 15.5 L13.5 0.5 H62.5" fill="none" stroke="#97a0aa"/><path d="M4 15.5 L6.5 12.5 L7.5 15.5Z" fill="#f8f9fa"/></svg>
<svg style="position:absolute;left:162px;top:634px;overflow:visible" width="63" height="16" viewBox="0 0 63 16"><path d="M0.5 15.5 L13.5 0.5 H62.5 V15.5Z" fill="#e6e9ed"/><path d="M0.5 15.5 L13.5 0.5 H62.5" fill="none" stroke="#97a0aa"/><path d="M4 15.5 L6.5 12.5 L7.5 15.5Z" fill="#f8f9fa"/></svg>
<svg style="position:absolute;left:215px;top:634px;overflow:visible" width="63" height="16" viewBox="0 0 63 16"><path d="M0.5 15.5 L13.5 0.5 H62.5 V15.5Z" fill="#e6e9ed"/><path d="M0.5 15.5 L13.5 0.5 H62.5" fill="none" stroke="#97a0aa"/><path d="M4 15.5 L6.5 12.5 L7.5 15.5Z" fill="#f8f9fa"/></svg>
<svg style="position:absolute;left:269.5px;top:634px;overflow:visible" width="69.0" height="16" viewBox="0 0 69.0 16"><path d="M0.5 15.5 L13.5 0.5 H68.5 V15.5Z" fill="#e6e9ed"/><path d="M0.5 15.5 L13.5 0.5 H68.5" fill="none" stroke="#97a0aa"/><path d="M4 15.5 L6.5 12.5 L7.5 15.5Z" fill="#f8f9fa"/></svg>
<svg style="position:absolute;left:330px;top:634px;overflow:visible" width="69.5" height="16" viewBox="0 0 69.5 16"><path d="M0.5 15.5 L13.5 0.5 H69.0 V15.5Z" fill="#e6e9ed"/><path d="M0.5 15.5 L13.5 0.5 H69.0" fill="none" stroke="#97a0aa"/><path d="M4 15.5 L6.5 12.5 L7.5 15.5Z" fill="#f8f9fa"/></svg>
<svg style="position:absolute;left:443.5px;top:634px;overflow:visible" width="62.5" height="16" viewBox="0 0 62.5 16"><path d="M0.5 15.5 L13.5 0.5 H62.0 V15.5Z" fill="#e6e9ed"/><path d="M0.5 15.5 L13.5 0.5 H62.0" fill="none" stroke="#97a0aa"/><path d="M4 15.5 L6.5 12.5 L7.5 15.5Z" fill="#f8f9fa"/></svg>
<svg style="position:absolute;left:496px;top:634px;overflow:visible" width="45" height="16" viewBox="0 0 45 16"><path d="M0.5 15.5 L13.5 0.5 H44.5 V15.5Z" fill="#e6e9ed"/><path d="M0.5 15.5 L13.5 0.5 H44.5" fill="none" stroke="#97a0aa"/><path d="M4 15.5 L6.5 12.5 L7.5 15.5Z" fill="#f8f9fa"/></svg>
<svg style="position:absolute;left:393px;top:634px;overflow:visible" width="66" height="16" viewBox="0 0 66 16"><path d="M0.5 0 V15.5 H50 L64.5 0Z" fill="#ffffff"/><path d="M0.5 0 V15.5" stroke="#97a0aa"/><path d="M50 15.5 L64.5 0.5" stroke="#97a0aa"/></svg>
<svg style="position:absolute;left:443.5px;top:634px;overflow:visible" width="62.5" height="16" viewBox="0 0 62.5 16"><path d="M0.5 15.5 L13.5 0.5 H62.0 V15.5Z" fill="#e6e9ed"/><path d="M0.5 15.5 L13.5 0.5 H62.0" fill="none" stroke="#97a0aa"/><path d="M4 15.5 L6.5 12.5 L7.5 15.5Z" fill="#f8f9fa"/></svg>
<svg style="position:absolute;left:496px;top:634px;overflow:visible" width="45" height="16" viewBox="0 0 45 16"><path d="M0.5 15.5 L13.5 0.5 H44.5 V15.5Z" fill="#e6e9ed"/><path d="M0.5 15.5 L13.5 0.5 H44.5" fill="none" stroke="#97a0aa"/><path d="M4 15.5 L6.5 12.5 L7.5 15.5Z" fill="#f8f9fa"/></svg>
<div style="position:absolute;left:122.00px;top:636.98px;font-family:'Liberation Sans',sans-serif;font-size:11.6px;line-height:11.6px;font-weight:400;color:#3c3c3c;white-space:nowrap;transform:scaleX(1.1221);transform-origin:0 0;">Лист5</div>
<div style="position:absolute;left:175.00px;top:636.98px;font-family:'Liberation Sans',sans-serif;font-size:11.6px;line-height:11.6px;font-weight:400;color:#3c3c3c;white-space:nowrap;transform:scaleX(1.1221);transform-origin:0 0;">Лист8</div>
<div style="position:absolute;left:228.00px;top:636.98px;font-family:'Liberation Sans',sans-serif;font-size:11.6px;line-height:11.6px;font-weight:400;color:#3c3c3c;white-space:nowrap;transform:scaleX(1.1221);transform-origin:0 0;">Лист9</div>
<div style="position:absolute;left:282.50px;top:636.98px;font-family:'Liberation Sans',sans-serif;font-size:11.6px;line-height:11.6px;font-weight:400;color:#3c3c3c;white-space:nowrap;transform:scaleX(1.0893);transform-origin:0 0;">Лист10</div>
<div style="position:absolute;left:343.00px;top:636.98px;font-family:'Liberation Sans',sans-serif;font-size:11.6px;line-height:11.6px;font-weight:400;color:#3c3c3c;white-space:nowrap;transform:scaleX(1.1284);transform-origin:0 0;">Лист11</div>
<div style="position:absolute;left:403.00px;top:636.98px;font-family:'Liberation Sans',sans-serif;font-size:11.6px;line-height:11.6px;font-weight:700;color:#222;white-space:nowrap;transform:scaleX(1.0382);transform-origin:0 0;">Лист1</div>
<div style="position:absolute;left:457.60px;top:636.98px;font-family:'Liberation Sans',sans-serif;font-size:11.6px;line-height:11.6px;font-weight:400;color:#3c3c3c;white-space:nowrap;transform:scaleX(1.0548);transform-origin:0 0;">Лист2</div>
<div style="position:absolute;left:509.60px;top:636.98px;font-family:'Liberation Sans',sans-serif;font-size:11.6px;line-height:11.6px;font-weight:400;color:#3c3c3c;white-space:nowrap;transform:scaleX(1.0548);transform-origin:0 0;">Лист3</div>
</div>
<div style="position:absolute;left:40px;top:649px;width:815px;height:1px;background:#8d949c"></div>
<div style="position:absolute;left:519.5px;top:635px;width:7px;height:14px;background:#fff;border:1px solid #555c66"></div>
<div style="position:absolute;left:522px;top:638px;width:1px;height:8px;background:#666"></div>
<svg style="position:absolute;left:532px;top:638px;overflow:visible" width="6" height="9" viewBox="0 0 6 9"><path d="M5.5 0 L0 4.5 L5.5 9Z" fill="#3c3c3c"/></svg>
<div style="position:absolute;left:543.5px;top:635px;width:201px;height:14.5px;border:1px solid #9aa1aa;border-radius:2px;background:linear-gradient(180deg,#f5f6f8,#e6e9ed 55%,#d9dde2)"></div>
<div style="position:absolute;left:641px;top:639px;width:1px;height:7px;background:#6f757d"></div>
<div style="position:absolute;left:643px;top:639px;width:1px;height:7px;background:#6f757d"></div>
<div style="position:absolute;left:645px;top:639px;width:1px;height:7px;background:#6f757d"></div>
<div style="position:absolute;left:647px;top:639px;width:1px;height:7px;background:#6f757d"></div>
<svg style="position:absolute;left:818px;top:638px;overflow:visible" width="6" height="9" viewBox="0 0 6 9"><path d="M0.5 0 L6 4.5 L0.5 9Z" fill="#3c3c3c"/></svg>
<div style="position:absolute;left:830px;top:635px;width:8px;height:14px;background:#fff;border:1px solid #555c66"></div>
<div style="position:absolute;left:833px;top:638px;width:1px;height:8px;background:#666"></div>
<div style="position:absolute;left:40px;top:650px;width:815px;height:22px;background:linear-gradient(180deg,#f4f5f7 0px,#f4f5f7 1px,#e8eaed 2px,#d9dce0 50%,#c4c7cc 100%)"></div>
<div style="position:absolute;left:48.50px;top:655.53px;font-family:'Liberation Sans',sans-serif;font-size:11.3px;line-height:11.3px;font-weight:400;color:#3b3b4b;white-space:nowrap;transform:scaleX(1.0347);transform-origin:0 0;">Готово</div>
<div style="position:absolute;left:100.80px;top:655.53px;font-family:'Liberation Sans',sans-serif;font-size:11.3px;line-height:11.3px;font-weight:400;color:#3b3b4b;white-space:nowrap;transform:scaleX(1.0244);transform-origin:0 0;">Фильтр: отбор</div>
<div style="position:absolute;left:187px;top:652px;width:1px;height:19px;background:#b8bdc4"></div>
<div style="position:absolute;left:188px;top:652px;width:1px;height:19px;background:#f4f5f7"></div>
<div style="position:absolute;left:222px;top:652px;width:1px;height:19px;background:#b8bdc4"></div>
<div style="position:absolute;left:223px;top:652px;width:1px;height:19px;background:#f4f5f7"></div>
<div style="position:absolute;left:597px;top:652px;width:1px;height:19px;background:#b8bdc4"></div>
<div style="position:absolute;left:598px;top:652px;width:1px;height:19px;background:#f4f5f7"></div>
<svg style="position:absolute;left:196px;top:653px;overflow:visible" width="16" height="14" viewBox="0 0 16 14"><rect x="2.5" y="3.5" width="13" height="10" fill="#fff" stroke="#4a6aa8"/>
<rect x="3" y="4" width="12" height="2.5" fill="#4a7ad8"/>
<path d="M4 8.5 h3 M8 8.5 h6 M4 10.5 h3 M8 10.5 h6 M4 12.5 h3 M8 12.5 h6" stroke="#6a8ac8" stroke-width=".9"/>
<circle cx="4.5" cy="3.5" r="3" fill="#e83a2a"/><circle cx="3.8" cy="2.8" r="1" fill="#ffb0a0"/></svg>
<div style="position:absolute;left:602px;top:652.5px;width:18.5px;height:18px;border:1px solid #dca84a;border-radius:3px;background:linear-gradient(180deg,#fff4c0,#fde38a 50%,#fcd868)"></div>
<svg style="position:absolute;left:605px;top:656px;overflow:visible" width="13" height="10" viewBox="0 0 13 10"><rect x="0" y="0" width="13" height="10" fill="#5a606a"/><path d="M1 1 h3 v2 h-3Z M5 1 h3 v2 h-3Z M9 1 h3 v2 h-3Z M1 4 h3 v2 h-3Z M5 4 h3 v2 h-3Z M9 4 h3 v2 h-3Z M1 7 h3 v2 h-3Z M5 7 h3 v2 h-3Z M9 7 h3 v2 h-3Z" fill="#f4f6f8"/></svg>
<svg style="position:absolute;left:623px;top:655px;overflow:visible" width="14" height="12" viewBox="0 0 14 12"><rect x="0.5" y="0.5" width="13" height="11" fill="#b4b9c0" stroke="#5a5f66"/><rect x="3.5" y="2.5" width="7" height="7" fill="#f6f7f8" stroke="#5a5f66"/><path d="M5 4.5 h4 M5 6.5 h4" stroke="#9aa0a8"/></svg>
<svg style="position:absolute;left:642px;top:655px;overflow:visible" width="14" height="12" viewBox="0 0 14 12"><rect x="0.5" y="0.5" width="13" height="11" fill="#b4b9c0" stroke="#5a5f66"/><rect x="1.5" y="1.5" width="3.5" height="6" fill="#fbfbfc"/><rect x="6" y="1.5" width="3.5" height="6" fill="#fbfbfc"/><path d="M5.5 1 V8" stroke="#777"/></svg>
<div style="position:absolute;left:667.70px;top:655.53px;font-family:'Liberation Sans',sans-serif;font-size:11.3px;line-height:11.3px;font-weight:400;color:#3b3b4b;white-space:nowrap;transform:scaleX(0.9429);transform-origin:0 0;">100%</div>
<div style="position:absolute;left:719px;top:660px;width:101px;height:1px;background:#9aa0a8"></div>
<div style="position:absolute;left:719px;top:661px;width:101px;height:1px;background:#f6f7f8"></div>
<div style="position:absolute;left:703.2px;top:652.5px;width:16px;height:16px;border-radius:50%;border:1px solid #8a9099;background:radial-gradient(circle at 50% 30%,#ffffff,#e6e8eb 70%,#d0d4d9)"></div>
<div style="position:absolute;left:706.7px;top:659.5px;width:9px;height:2px;background:#444"></div>
<div style="position:absolute;left:819.4px;top:652.5px;width:16px;height:16px;border-radius:50%;border:1px solid #8a9099;background:radial-gradient(circle at 50% 30%,#ffffff,#e6e8eb 70%,#d0d4d9)"></div>
<div style="position:absolute;left:822.9px;top:659.5px;width:9px;height:2px;background:#444"></div>
<div style="position:absolute;left:826.4px;top:656px;width:2px;height:9px;background:#444"></div>
<svg style="position:absolute;left:764px;top:654px;overflow:visible" width="10" height="13" viewBox="0 0 10 13"><path d="M0.5 0.5 H9.5 V8.5 L5 12.5 L0.5 8.5Z" fill="#f4f5f7" stroke="#7a8088"/></svg>
<div style="position:absolute;left:849px;top:663px;width:2px;height:2px;background:#a9afb7"></div>
<div style="position:absolute;left:846px;top:666px;width:2px;height:2px;background:#a9afb7"></div>
<div style="position:absolute;left:849px;top:666px;width:2px;height:2px;background:#a9afb7"></div>
<div style="position:absolute;left:843px;top:669px;width:2px;height:2px;background:#a9afb7"></div>
<div style="position:absolute;left:846px;top:669px;width:2px;height:2px;background:#a9afb7"></div>
<div style="position:absolute;left:849px;top:669px;width:2px;height:2px;background:#a9afb7"></div>
<div style="position:absolute;left:40px;top:672px;width:815px;height:1px;background:#6f7882"></div>
<svg style="position:absolute;left:750px;top:67px;overflow:visible" width="11" height="9" viewBox="0 0 11 9"><path d="M2 6.5 L5.5 3 L9 6.5" fill="none" stroke="#404040" stroke-width="3.4" stroke-linejoin="round" stroke-linecap="round"/><path d="M2 6.5 L5.5 3 L9 6.5" fill="none" stroke="#fff" stroke-width="1.2" stroke-linejoin="round" stroke-linecap="round"/></svg>
<div style="position:absolute;left:769px;top:62.8px;width:16px;height:16px;border-radius:50%;background:radial-gradient(circle at 45% 30%,#8fb8ee 0,#4a82d6 55%,#2f64b8 100%);border:1px solid #3a6cc0"></div>
<div style="position:absolute;left:773.50px;top:65.42px;font-family:'Liberation Sans',sans-serif;font-size:12.5px;line-height:12.5px;font-weight:700;color:#fff;white-space:nowrap;">?</div>
<div style="position:absolute;left:794px;top:70px;width:11px;height:5px;background:#fff;border:1.5px solid #404040;border-radius:1.5px"></div>
<svg style="position:absolute;left:815px;top:66px;overflow:visible" width="12" height="11" viewBox="0 0 12 11"><rect x="4.2" y="0.8" width="7" height="6.2" fill="#fff" stroke="#404040" stroke-width="1.6"/><rect x="0.8" y="4" width="7" height="6.2" fill="#fff" stroke="#404040" stroke-width="1.6"/><rect x="2.5" y="6.5" width="3.5" height="2" fill="#404040" opacity=".0"/></svg>
<svg style="position:absolute;left:837px;top:66px;overflow:visible" width="13" height="10" viewBox="0 0 13 10"><path d="M2.5 2 L10.5 8 M10.5 2 L2.5 8" stroke="#404040" stroke-width="3.8" stroke-linecap="round"/><path d="M2.5 2 L10.5 8 M10.5 2 L2.5 8" stroke="#fff" stroke-width="1.5" stroke-linecap="round"/></svg>
</body></html>
